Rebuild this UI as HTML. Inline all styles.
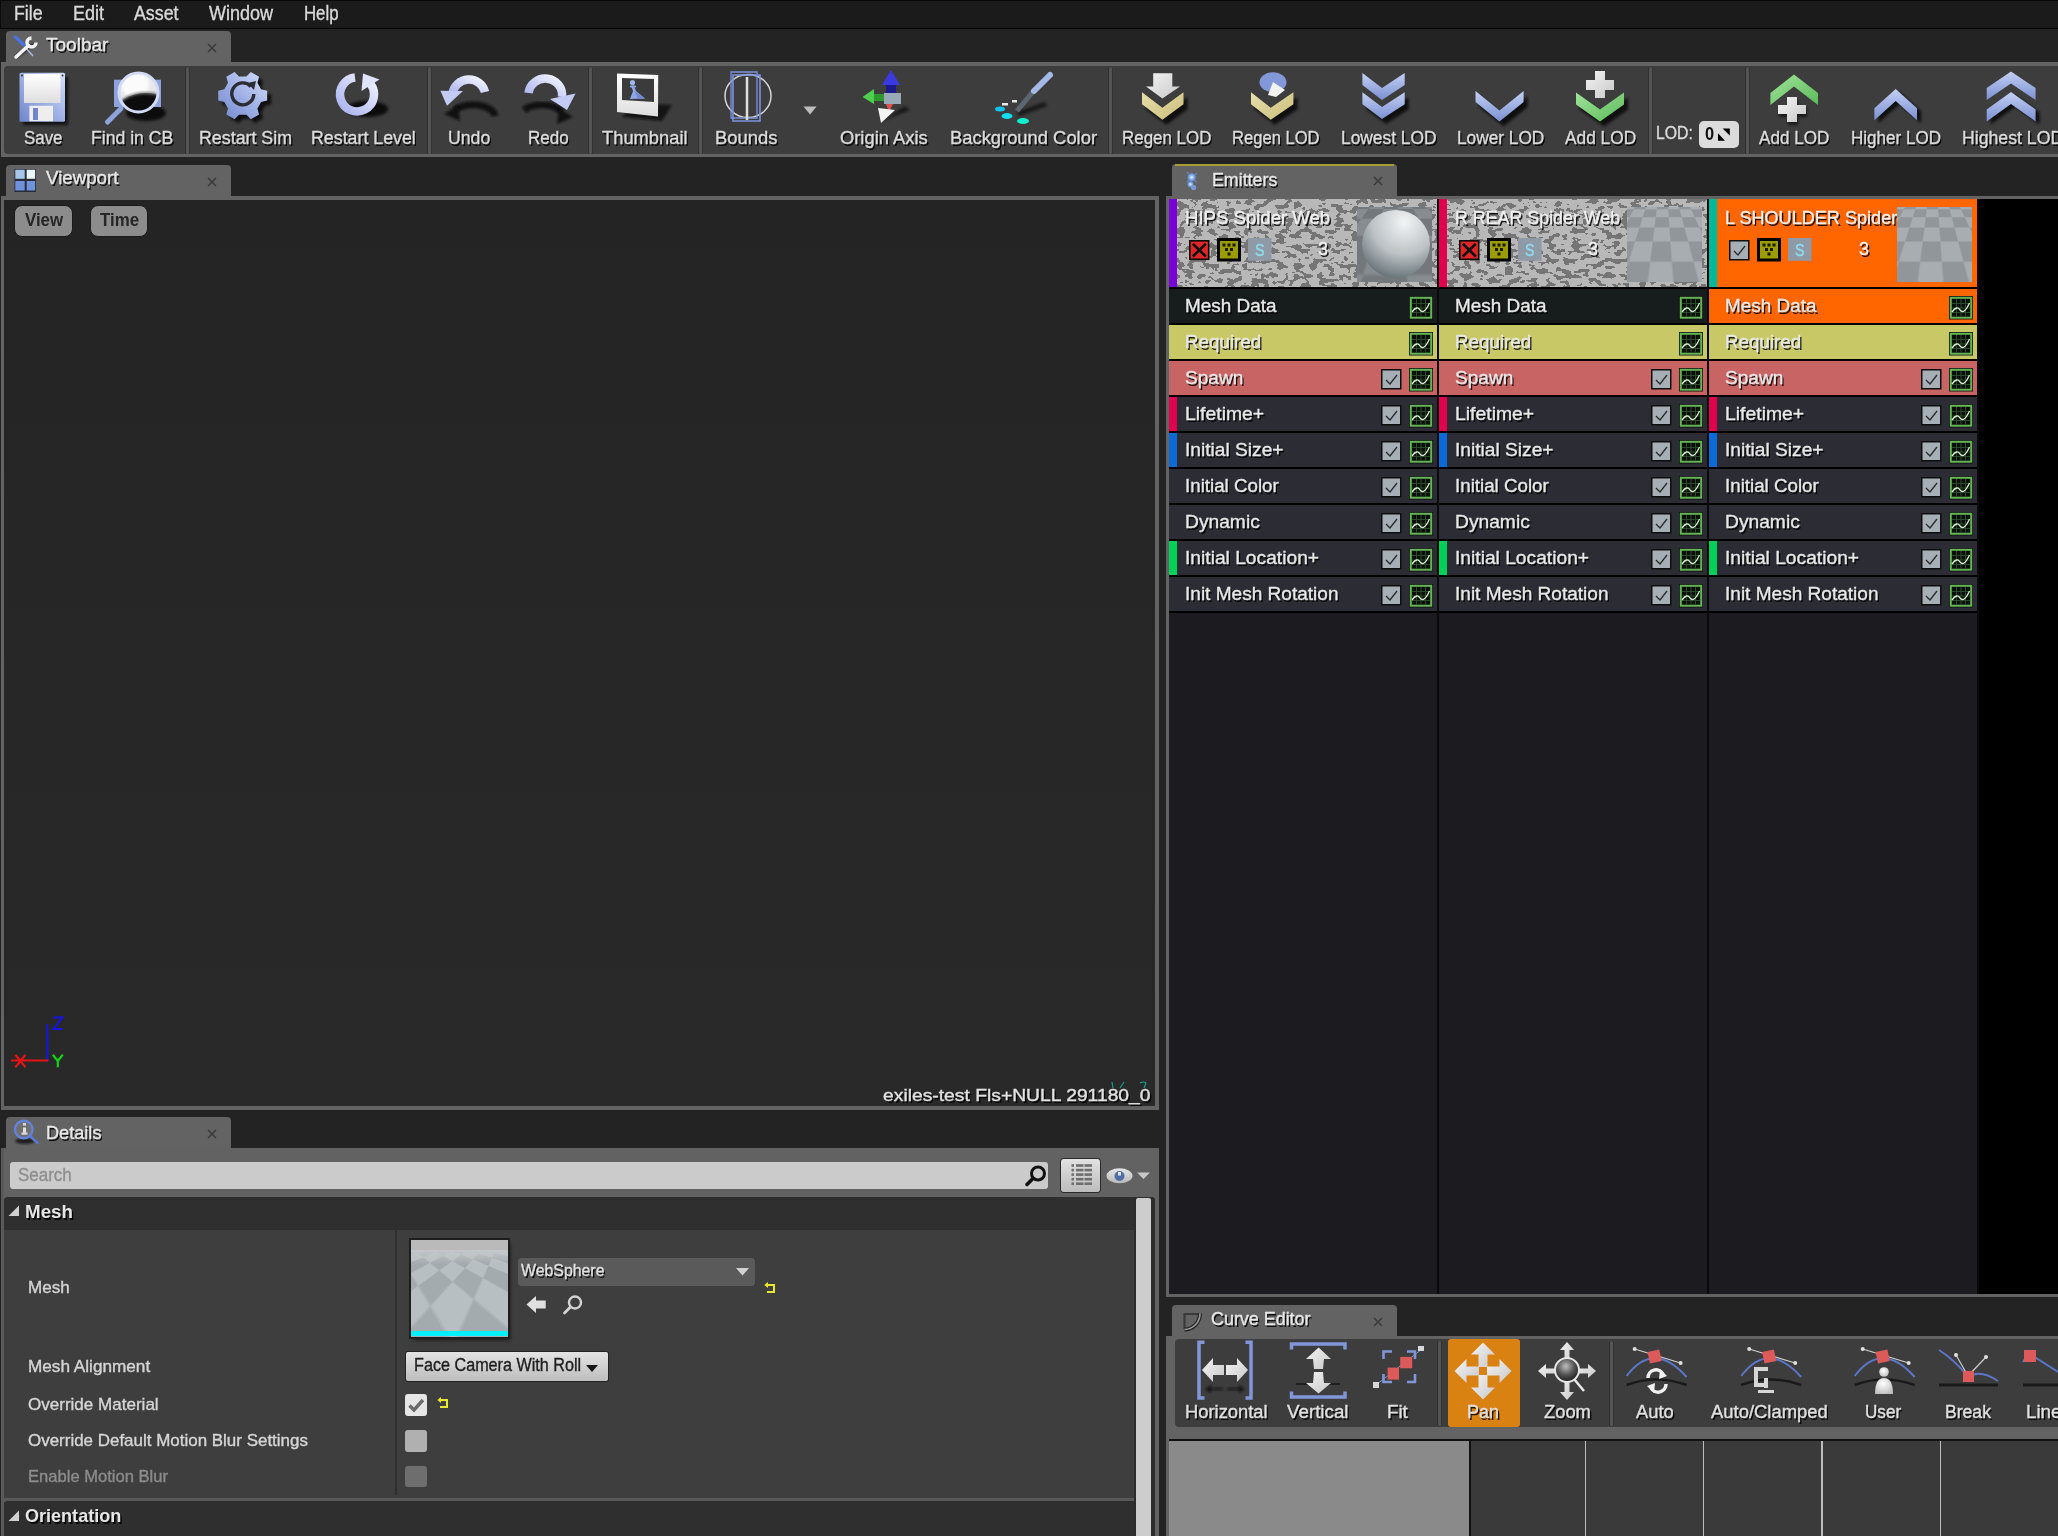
<!DOCTYPE html>
<html><head><meta charset="utf-8"><style>
html,body{margin:0;padding:0}
body{width:2058px;height:1536px;overflow:hidden;background:#232323;position:relative;font-family:"Liberation Sans",sans-serif}
div,svg{position:absolute;box-sizing:border-box}
.t{white-space:nowrap;transform-origin:0 0;-webkit-text-stroke:0.35px currentColor}
</style></head><body>
<svg style="left:0;top:0;position:absolute" width="0" height="0"><defs>
<filter id="bl" x="-50%" y="-50%" width="200%" height="200%"><feGaussianBlur stdDeviation="1.6"/></filter>
<filter id="bl2" x="-50%" y="-50%" width="200%" height="200%"><feGaussianBlur stdDeviation="0.8"/></filter>
<linearGradient id="gBlue" x1="1" y1="0" x2="0" y2="1"><stop offset="0" stop-color="#d6e0fa"/><stop offset="0.5" stop-color="#9fb1e6"/><stop offset="1" stop-color="#7086cc"/></linearGradient>
<linearGradient id="gBlueV" x1="0" y1="0" x2="0" y2="1"><stop offset="0" stop-color="#c4d0f4"/><stop offset="1" stop-color="#7a90d2"/></linearGradient>
<linearGradient id="gLav" x1="1" y1="0" x2="0" y2="1"><stop offset="0" stop-color="#f2f4ff"/><stop offset="0.6" stop-color="#c6ccf6"/><stop offset="1" stop-color="#aab2ee"/></linearGradient>
<linearGradient id="gWhite" x1="0" y1="0" x2="0" y2="1"><stop offset="0" stop-color="#ffffff"/><stop offset="1" stop-color="#dedede"/></linearGradient>
<linearGradient id="gWhite2" x1="0" y1="0" x2="1" y2="1"><stop offset="0" stop-color="#f4f4f4"/><stop offset="1" stop-color="#c8c8c8"/></linearGradient>
<linearGradient id="gGold" x1="0" y1="0" x2="1" y2="1"><stop offset="0" stop-color="#e8e0ac"/><stop offset="1" stop-color="#c9bd7a"/></linearGradient>
<linearGradient id="gGreen" x1="0" y1="0" x2="1" y2="1"><stop offset="0" stop-color="#9fe39a"/><stop offset="1" stop-color="#5dbb5a"/></linearGradient>
<linearGradient id="gLens" x1="0" y1="0" x2="0" y2="1"><stop offset="0" stop-color="#f6f6f6"/><stop offset="0.42" stop-color="#b0b0b0"/><stop offset="0.55" stop-color="#2a2a2a"/><stop offset="1" stop-color="#000"/></linearGradient>
<radialGradient id="gSphere" cx="0.62" cy="0.18" r="0.95"><stop offset="0" stop-color="#f2f4f5"/><stop offset="0.5" stop-color="#bcc2c5"/><stop offset="1" stop-color="#4f5c62"/></radialGradient>
<radialGradient id="gBall" cx="0.45" cy="0.35" r="0.7"><stop offset="0" stop-color="#bfbfbf"/><stop offset="0.5" stop-color="#555"/><stop offset="1" stop-color="#111"/></radialGradient>
<radialGradient id="gBallW" cx="0.45" cy="0.35" r="0.7"><stop offset="0" stop-color="#ffffff"/><stop offset="1" stop-color="#bdbdbd"/></radialGradient>
<linearGradient id="gBtn" x1="0" y1="0" x2="0" y2="1"><stop offset="0" stop-color="#e6e6e6"/><stop offset="1" stop-color="#b9b9b9"/></linearGradient>
<filter id="camo" x="0" y="0" width="100%" height="100%">
 <feTurbulence type="fractalNoise" baseFrequency="0.09 0.13" numOctaves="2" seed="7" result="n"/>
 <feColorMatrix type="matrix" values="0 0 0 0 0  0 0 0 0 0  0 0 0 0 0  3 0 0 0 -1.05" in="n" result="a"/>
 <feComponentTransfer in="a" result="b"><feFuncA type="discrete" tableValues="0 0 1 1"/></feComponentTransfer>
 <feFlood flood-color="#6c6c6c" result="c"/>
 <feComposite in="c" in2="b" operator="in" result="d"/>
 <feFlood flood-color="#b6b6b6" result="e"/>
 <feMerge><feMergeNode in="e"/><feMergeNode in="d"/></feMerge>
</filter>
</defs></svg>
<div style="left:0px;top:0px;width:2058px;height:29px;background:#1b1b1b;border-top:1px solid #080808;border-bottom:1.5px solid #050505;border-left:1px solid #0a0a0a;"></div>
<div class="t" style="left:14.30px;top:4.04px;font-size:19.57px;line-height:19.57px;color:#dadada;transform:scaleX(0.9065);">File</div>
<div class="t" style="left:73.10px;top:4.04px;font-size:19.57px;line-height:19.57px;color:#dadada;transform:scaleX(0.9199);">Edit</div>
<div class="t" style="left:134.30px;top:4.04px;font-size:19.57px;line-height:19.57px;color:#dadada;transform:scaleX(0.9098);">Asset</div>
<div class="t" style="left:209.00px;top:4.04px;font-size:19.57px;line-height:19.57px;color:#dadada;transform:scaleX(0.9217);">Window</div>
<div class="t" style="left:304.00px;top:4.04px;font-size:19.57px;line-height:19.57px;color:#dadada;transform:scaleX(0.8570);">Help</div>
<div style="left:6.4px;top:31px;width:224.6px;height:32px;background:#636363;border-radius:4px 4px 0 0;"></div>
<div class="t" style="left:46.00px;top:36.47px;font-size:18.70px;line-height:18.70px;color:#e8e8e8;text-shadow:1.5px 1.5px 0 rgba(0,0,0,.85);transform:scaleX(1.0192);">Toolbar</div>
<svg style="left:207.4px;top:43px;" width="10" height="10" viewBox="0 0 10 10"><path d="M1 1 L9 9 M9 1 L1 9" stroke="#3a3a3a" stroke-width="1.5"/></svg>
<div style="left:1px;top:62px;width:2057px;height:95px;background:#636363;"></div>
<div style="left:3.6px;top:65.5px;width:2054.4px;height:88.5px;background:#3d3d3d;border-radius:4px 0 0 4px;"></div>
<div style="left:186.2px;top:67px;width:3.2px;height:87px;background:#545454;border-radius:2px;box-shadow:-0.8px 0 0 #2c2c2c, 0.8px 0 0 #333;"></div>
<div style="left:427.5px;top:67px;width:3.2px;height:87px;background:#545454;border-radius:2px;box-shadow:-0.8px 0 0 #2c2c2c, 0.8px 0 0 #333;"></div>
<div style="left:588.5px;top:67px;width:3.2px;height:87px;background:#545454;border-radius:2px;box-shadow:-0.8px 0 0 #2c2c2c, 0.8px 0 0 #333;"></div>
<div style="left:699.0px;top:67px;width:3.2px;height:87px;background:#545454;border-radius:2px;box-shadow:-0.8px 0 0 #2c2c2c, 0.8px 0 0 #333;"></div>
<div style="left:1108.6px;top:67px;width:3.2px;height:87px;background:#545454;border-radius:2px;box-shadow:-0.8px 0 0 #2c2c2c, 0.8px 0 0 #333;"></div>
<div style="left:1648.5px;top:67px;width:3.2px;height:87px;background:#545454;border-radius:2px;box-shadow:-0.8px 0 0 #2c2c2c, 0.8px 0 0 #333;"></div>
<div style="left:1746.0px;top:67px;width:3.2px;height:87px;background:#545454;border-radius:2px;box-shadow:-0.8px 0 0 #2c2c2c, 0.8px 0 0 #333;"></div>
<div class="t" style="left:23.50px;top:129.04px;font-size:18.26px;line-height:18.26px;color:#dcdcdc;text-shadow:1.5px 1.5px 0 rgba(0,0,0,.85);transform:scaleX(0.9247);">Save</div>
<div class="t" style="left:90.90px;top:129.04px;font-size:18.26px;line-height:18.26px;color:#dcdcdc;text-shadow:1.5px 1.5px 0 rgba(0,0,0,.85);transform:scaleX(0.9656);">Find in CB</div>
<div class="t" style="left:198.80px;top:129.04px;font-size:18.26px;line-height:18.26px;color:#dcdcdc;text-shadow:1.5px 1.5px 0 rgba(0,0,0,.85);transform:scaleX(0.9762);">Restart Sim</div>
<div class="t" style="left:311.00px;top:129.04px;font-size:18.26px;line-height:18.26px;color:#dcdcdc;text-shadow:1.5px 1.5px 0 rgba(0,0,0,.85);transform:scaleX(0.9749);">Restart Level</div>
<div class="t" style="left:447.80px;top:129.04px;font-size:18.26px;line-height:18.26px;color:#dcdcdc;text-shadow:1.5px 1.5px 0 rgba(0,0,0,.85);transform:scaleX(0.9692);">Undo</div>
<div class="t" style="left:527.50px;top:129.04px;font-size:18.26px;line-height:18.26px;color:#dcdcdc;text-shadow:1.5px 1.5px 0 rgba(0,0,0,.85);transform:scaleX(0.9326);">Redo</div>
<div class="t" style="left:601.70px;top:129.04px;font-size:18.26px;line-height:18.26px;color:#dcdcdc;text-shadow:1.5px 1.5px 0 rgba(0,0,0,.85);transform:scaleX(1.0038);">Thumbnail</div>
<div class="t" style="left:715.00px;top:129.04px;font-size:18.26px;line-height:18.26px;color:#dcdcdc;text-shadow:1.5px 1.5px 0 rgba(0,0,0,.85);transform:scaleX(1.0089);">Bounds</div>
<div class="t" style="left:840.30px;top:129.04px;font-size:18.26px;line-height:18.26px;color:#dcdcdc;text-shadow:1.5px 1.5px 0 rgba(0,0,0,.85);transform:scaleX(1.0047);">Origin Axis</div>
<div class="t" style="left:950.40px;top:129.04px;font-size:18.26px;line-height:18.26px;color:#dcdcdc;text-shadow:1.5px 1.5px 0 rgba(0,0,0,.85);transform:scaleX(1.0063);">Background Color</div>
<div class="t" style="left:1121.50px;top:129.04px;font-size:18.26px;line-height:18.26px;color:#dcdcdc;text-shadow:1.5px 1.5px 0 rgba(0,0,0,.85);transform:scaleX(0.9272);">Regen LOD</div>
<div class="t" style="left:1231.80px;top:129.04px;font-size:18.26px;line-height:18.26px;color:#dcdcdc;text-shadow:1.5px 1.5px 0 rgba(0,0,0,.85);transform:scaleX(0.9085);">Regen LOD</div>
<div class="t" style="left:1340.80px;top:129.04px;font-size:18.26px;line-height:18.26px;color:#dcdcdc;text-shadow:1.5px 1.5px 0 rgba(0,0,0,.85);transform:scaleX(0.9514);">Lowest LOD</div>
<div class="t" style="left:1457.30px;top:129.04px;font-size:18.26px;line-height:18.26px;color:#dcdcdc;text-shadow:1.5px 1.5px 0 rgba(0,0,0,.85);transform:scaleX(0.9453);">Lower LOD</div>
<div class="t" style="left:1565.30px;top:129.04px;font-size:18.26px;line-height:18.26px;color:#dcdcdc;text-shadow:1.5px 1.5px 0 rgba(0,0,0,.85);transform:scaleX(0.9481);">Add LOD</div>
<div class="t" style="left:1759.40px;top:129.04px;font-size:18.26px;line-height:18.26px;color:#dcdcdc;text-shadow:1.5px 1.5px 0 rgba(0,0,0,.85);transform:scaleX(0.9361);">Add LOD</div>
<div class="t" style="left:1850.90px;top:129.04px;font-size:18.26px;line-height:18.26px;color:#dcdcdc;text-shadow:1.5px 1.5px 0 rgba(0,0,0,.85);transform:scaleX(0.9334);">Higher LOD</div>
<div class="t" style="left:1961.70px;top:129.04px;font-size:18.26px;line-height:18.26px;color:#dcdcdc;text-shadow:1.5px 1.5px 0 rgba(0,0,0,.85);transform:scaleX(0.9690);">Highest LOD</div>
<svg style="left:18px;top:70px;overflow:visible;" width="54" height="56" viewBox="18 70 54 56">
<rect x="23" y="77" width="45" height="48" fill="#000" opacity=".7" filter="url(#bl)"/>
<rect x="19.5" y="72.7" width="45.5" height="49" rx="1.5" fill="url(#gBlue)"/>
<rect x="24" y="74" width="36.5" height="29" fill="url(#gWhite)"/>
<rect x="29.4" y="105.7" width="23.6" height="15.5" fill="#eeeeee"/>
<rect x="33" y="108" width="5" height="12" fill="#6f86cc"/>
<circle cx="22" cy="75.5" r="1" fill="#333"/><circle cx="62.5" cy="75.5" r="1" fill="#333"/></svg>
<svg style="left:104px;top:68px;overflow:visible;" width="60" height="58" viewBox="104 68 60 58">
<ellipse cx="146" cy="113" rx="20" ry="8" fill="#000" opacity=".8" filter="url(#bl)"/>
<rect x="114" y="79.7" width="47" height="27.3" fill="#8fa2dc"/>
<line x1="107.5" y1="122" x2="121" y2="108.5" stroke="#8ea2dc" stroke-width="5" stroke-linecap="round"/>
<clipPath id="lensc"><circle cx="138.5" cy="92.5" r="19.5"/></clipPath>
<circle cx="138.5" cy="92.5" r="19.5" fill="#e8e8e8"/>
<g clip-path="url(#lensc)"><circle cx="135" cy="84" r="14" fill="#fbfbfb" filter="url(#bl)"/><ellipse cx="146" cy="112" rx="30" ry="19" fill="#0c0c0c"/><ellipse cx="146" cy="112" rx="30" ry="19" fill="none" stroke="#777" stroke-width="2" filter="url(#bl2)"/></g>
<circle cx="138.5" cy="92.5" r="19.5" fill="none" stroke="#d2dcf6" stroke-width="3"/></svg>
<svg style="left:215px;top:68px;overflow:visible;" width="57" height="58" viewBox="215 68 57 58">
<polygon points="265.1,93.3 271.2,94.8 271.2,104.4 265.1,105.9 261.4,112.4 263.1,118.5 254.8,123.2 250.4,118.7 243.0,118.7 238.6,123.2 230.3,118.5 232.0,112.4 228.3,105.9 222.2,104.4 222.2,94.8 228.3,93.3 232.0,86.8 230.3,80.7 238.6,76.0 243.0,80.5 250.4,80.5 254.8,76.0 263.1,80.7 261.4,86.8" fill="#000" opacity=".75" filter="url(#bl)"/>
<polygon points="261.1,89.3 267.2,90.8 267.2,100.4 261.1,101.9 257.4,108.4 259.1,114.5 250.8,119.2 246.4,114.7 239.0,114.7 234.6,119.2 226.3,114.5 228.0,108.4 224.3,101.9 218.2,100.4 218.2,90.8 224.3,89.3 228.0,82.8 226.3,76.7 234.6,72.0 239.0,76.5 246.4,76.5 250.8,72.0 259.1,76.7 257.4,82.8" fill="url(#gBlue)"/>
<path d="M 251 86.5 A 11 11 0 1 0 253.8 94" stroke="#2c2c34" stroke-width="3.4" fill="none"/>
<polygon points="247.5,83 256,81 254,90" fill="#2c2c34"/></svg>
<svg style="left:330px;top:68px;overflow:visible;" width="60" height="58" viewBox="330 68 60 58">
<ellipse cx="367" cy="109" rx="21" ry="8" fill="#000" opacity=".8" filter="url(#bl)"/>
<path d="M 355 77.5 A 17 17 0 1 0 370.5 84" stroke="url(#gLav)" stroke-width="8.5" fill="none"/>
<polygon points="361.5,91 363,73.5 379.5,79.5" fill="#dfe3fc"/></svg>
<svg style="left:438px;top:72px;overflow:visible;" width="62" height="52" viewBox="438 72 62 52">
<path d="M 495 116 A 22 12 0 0 0 455 110" stroke="#111" stroke-width="7" fill="none" opacity=".9" filter="url(#bl2)"/>
<polygon points="444,114 458,105 460,121" fill="#111" opacity=".9" filter="url(#bl2)"/>
<path d="M 485 92 A 16.5 16 0 0 0 452.5 94" stroke="url(#gLav)" stroke-width="8.5" fill="none"/>
<polygon points="440.4,90.8 463,91 447,105.7" fill="#c3cbf4"/></svg>
<svg style="left:520px;top:72px;overflow:visible;" width="60" height="52" viewBox="520 72 60 52">
<path d="M 524 110 A 22 12 0 0 1 562 112" stroke="#111" stroke-width="7" fill="none" opacity=".9" filter="url(#bl2)"/>
<polygon points="573,117 559,108 557,124" fill="#111" opacity=".9" filter="url(#bl2)"/>
<path d="M 528.5 93 A 16.5 16 0 0 1 562 97" stroke="url(#gLav)" stroke-width="8.5" fill="none"/>
<polygon points="575.5,93.5 567,110 550,99" fill="#c3cbf4"/></svg>
<svg style="left:614px;top:70px;overflow:visible;" width="62" height="56" viewBox="614 70 62 56">
<polygon points="622,117 662,121 672,105 636,104" fill="#111" opacity=".85" filter="url(#bl2)"/>
<polygon points="617,73.5 658.2,75 658,116.4 617,112" fill="url(#gWhite)"/>
<polygon points="622,78 654,79 654,102 622,100" fill="#3b3b3b"/>
<circle cx="632.5" cy="82.5" r="2.6" fill="#9fb4ec"/>
<ellipse cx="633" cy="86.5" rx="3.2" ry="1.2" fill="#8ea6e6"/>
<polygon points="631.5,87 634.5,87 636,91 645,98.5 630,99 633,91" fill="#8ea6e6"/>
<polygon points="634.5,91 645,98.5 638,99" fill="#6f88d0"/></svg>
<svg style="left:720px;top:68px;overflow:visible;" width="62" height="60" viewBox="720 68 62 60">
<ellipse cx="748" cy="96" rx="23" ry="21.5" fill="none" stroke="#d4d4d4" stroke-width="1.5"/>
<polygon points="733,75 760,75 760,121 733,121" fill="none" stroke="#7b92dc" stroke-width="1.6"/>
<polygon points="731,72 757,72 757,118 731,118" fill="none" stroke="#7b92dc" stroke-width="1.3"/>
<line x1="747" y1="77" x2="747" y2="120" stroke="#e0e0e0" stroke-width="2.5"/></svg>
<svg style="left:858px;top:66px;overflow:visible;" width="56" height="60" viewBox="858 66 56 60">
<polygon points="880,122 905,106 910,110" fill="#000" opacity=".6" filter="url(#bl)"/>
<polygon points="884,93 901,93 901,104 884,104" fill="#9aa9b8"/>
<polygon points="886,80 896,80 896,93 886,93" fill="#1a1a8c"/>
<polygon points="891,70 900,85 882,85" fill="#3a3ae0"/>
<polygon points="872,94 884,94 884,101 872,101" fill="#2e9a2e"/>
<polygon points="862.5,97 874,89 874,104" fill="#4fcf4f"/>
<polygon points="886,104 893,104 889,112" fill="#e05050"/>
<polygon points="881,123 878,108 895,110" fill="#f4f4f4"/></svg>
<svg style="left:994px;top:68px;overflow:visible;" width="64" height="58" viewBox="994 68 64 58">
<line x1="1018" y1="114" x2="1046" y2="104" stroke="#000" stroke-width="5" opacity=".6" filter="url(#bl)"/>
<line x1="1017" y1="111" x2="1036" y2="88" stroke="#5b6670" stroke-width="5"/>
<line x1="1034" y1="91" x2="1050" y2="75" stroke="#a5b9e8" stroke-width="6" stroke-linecap="round"/>
<ellipse cx="1000" cy="109" rx="5" ry="2.5" fill="#10c4e8"/>
<ellipse cx="1007" cy="116" rx="5.5" ry="3" fill="#10e0f0"/>
<ellipse cx="1023" cy="121" rx="6" ry="3" fill="#10f0d0"/>
<rect x="1002" y="103" width="6" height="2.5" fill="#e8e8e8"/><rect x="1012" y="100" width="5" height="2.5" fill="#e8e8e8"/></svg>
<svg style="left:1140px;top:70px;overflow:visible;" width="55" height="56" viewBox="1140 70 55 56"><polygon points="1146.0,97.2 1166.4,112.7 1187.5,97.2 1187.5,109.2 1166.4,124.7 1146.0,109.2" fill="#000" opacity="0.75" filter="url(#bl)"/>
<polygon points="1142.0,92.2 1162.4,107.7 1183.5,92.2 1183.5,104.2 1162.4,119.7 1142.0,104.2" fill="url(#gGold)"/>
<polygon points="1153.2,73.2 1172.3,73.2 1172.3,86.5 1180,86.5 1162.4,98.5 1146,86.5 1153.2,86.5" fill="url(#gWhite2)"/></svg>
<svg style="left:1248px;top:68px;overflow:visible;" width="56" height="58" viewBox="1248 68 56 58"><polygon points="1255.0,97.2 1274.8,112.7 1297.4,97.2 1297.4,109.2 1274.8,124.7 1255.0,109.2" fill="#000" opacity="0.75" filter="url(#bl)"/>
<polygon points="1251.0,92.2 1270.8,107.7 1293.4,92.2 1293.4,104.2 1270.8,119.7 1251.0,104.2" fill="url(#gGold)"/>
<ellipse cx="1273" cy="82.3" rx="13.5" ry="10" fill="#8298d8"/>
<polygon points="1273,82 1285,90 1276,97 1268,95" fill="#f2f2f2"/></svg>
<svg style="left:1360px;top:70px;overflow:visible;" width="56" height="56" viewBox="1360 70 56 56"><polygon points="1366.4,97.2 1386.0,112.0 1408.7,97.2 1408.7,109.2 1386.0,124.0 1366.4,109.2" fill="#000" opacity="0.75" filter="url(#bl)"/>
<polygon points="1362.4,73.0 1382.0,87.9 1404.7,73.0 1404.7,85.0 1382.0,99.9 1362.4,85.0" fill="url(#gBlueV)"/><polygon points="1362.4,92.2 1382.0,107.0 1404.7,92.2 1404.7,104.2 1382.0,119.0 1362.4,104.2" fill="url(#gBlueV)"/></svg>
<svg style="left:1472px;top:88px;overflow:visible;" width="58" height="38" viewBox="1472 88 58 38"><polygon points="1479.5,96.0 1503.5,115.5 1527.6,96.0 1527.6,107.0 1503.5,126.5 1479.5,107.0" fill="#000" opacity="0.75" filter="url(#bl)"/><polygon points="1475.5,91.0 1499.5,110.5 1523.6,91.0 1523.6,102.0 1499.5,121.5 1475.5,102.0" fill="url(#gBlueV)"/></svg>
<svg style="left:1574px;top:68px;overflow:visible;" width="56" height="58" viewBox="1574 68 56 58"><polygon points="1580.0,97.5 1604.0,114.5 1628.0,97.5 1628.0,109.5 1604.0,126.5 1580.0,109.5" fill="#000" opacity="0.75" filter="url(#bl)"/><polygon points="1576.0,92.5 1600.0,109.5 1624.0,92.5 1624.0,104.5 1600.0,121.5 1576.0,104.5" fill="url(#gGreen)"/>
<polygon points="1595,71 1605,71 1605,80 1614,80 1614,90 1605,90 1605,98 1595,98 1595,90 1586,90 1586,80 1595,80" fill="url(#gWhite2)"/></svg>
<svg style="left:1768px;top:70px;overflow:visible;" width="56" height="56" viewBox="1768 70 56 56"><polygon points="1783,97 1793,97 1793,105 1802,105 1802,114 1793,114 1793,122 1783,122 1783,114 1774,114 1774,105 1783,105" fill="#000" opacity=".6" transform="translate(5,3)" filter="url(#bl)"/>
<polygon points="1770.4,105.0 1794.0,86.6 1818.0,105.0 1818.0,93.0 1794.0,74.6 1770.4,93.0" fill="url(#gGreen)"/>
<polygon points="1787,97 1797,97 1797,105 1806,105 1806,114 1797,114 1797,122 1787,122 1787,114 1778,114 1778,105 1787,105" fill="url(#gWhite2)"/></svg>
<svg style="left:1872px;top:86px;overflow:visible;" width="52" height="40" viewBox="1872 86 52 40"><polygon points="1878.4,123.3 1899.7,104.0 1921.0,123.3 1921.0,111.3 1899.7,92.0 1878.4,111.3" fill="#000" opacity="0.75" filter="url(#bl)"/><polygon points="1874.4,120.3 1895.7,101.0 1917.0,120.3 1917.0,108.3 1895.7,89.0 1874.4,108.3" fill="url(#gBlueV)"/></svg>
<svg style="left:1984px;top:68px;overflow:visible;" width="74" height="58" viewBox="1984 68 74 58"><polygon points="1990.7,124.4 2015.0,107.0 2039.6,124.4 2039.6,112.4 2015.0,95.0 1990.7,112.4" fill="#000" opacity="0.75" filter="url(#bl)"/><polygon points="1986.7,100.0 2011.0,83.4 2035.6,100.0 2035.6,88.0 2011.0,71.4 1986.7,88.0" fill="url(#gBlueV)"/><polygon points="1986.7,121.4 2011.0,104.0 2035.6,121.4 2035.6,109.4 2011.0,92.0 1986.7,109.4" fill="url(#gBlueV)"/></svg>
<svg style="left:803px;top:106px;" width="14" height="9" viewBox="0 0 14 9"><path d="M0.5 0.5 L13.5 0.5 L7 8.5 Z" fill="#bdbdbd"/></svg>
<div class="t" style="left:1656.00px;top:125.49px;font-size:17.97px;line-height:17.97px;color:#dcdcdc;transform:scaleX(0.8794);">LOD:</div>
<div style="left:1698.5px;top:120.9px;width:40.4px;height:26.7px;background:#dcdcdc;border-radius:5px;"></div>
<div class="t" style="left:1704.70px;top:125.56px;font-size:17.54px;line-height:17.54px;color:#111;font-weight:bold;-webkit-text-stroke:0;transform:scaleX(0.9350);">0</div>
<svg style="left:1716px;top:127px;overflow:visible;" width="16" height="15" viewBox="1716 127 16 15"><polygon points="1722.6,128.6 1729.8,128.6 1729.8,135.6" fill="#000"/><polygon points="1718,133.2 1718,140.7 1725,140.7" fill="#000"/></svg>
<div style="left:6.4px;top:164.7px;width:225px;height:32.3px;background:#636363;border-radius:4px 4px 0 0;"></div>
<div class="t" style="left:46.00px;top:170.13px;font-size:17.68px;line-height:17.68px;color:#e8e8e8;text-shadow:1.5px 1.5px 0 rgba(0,0,0,.85);transform:scaleX(1.0574);">Viewport</div>
<svg style="left:207.4px;top:176.7px;" width="10" height="10" viewBox="0 0 10 10"><path d="M1 1 L9 9 M9 1 L1 9" stroke="#3a3a3a" stroke-width="1.5"/></svg>
<div style="left:1px;top:196px;width:1157.5px;height:914px;background:#636363;"></div>
<div style="left:4px;top:199.5px;width:1151.4px;height:906.5px;background:linear-gradient(#242424,#292929);"></div>
<div style="left:14.399999999999999px;top:205.3px;width:58.7px;height:31.8px;background:#8c8c8c;border-radius:8px;border:1.5px solid #1a1a1a;"></div>
<div class="t" style="left:25.00px;top:211.91px;font-size:17.83px;line-height:17.83px;color:#262626;font-weight:bold;-webkit-text-stroke:0;transform:scaleX(0.9422);">View</div>
<div style="left:89.60000000000001px;top:205.3px;width:58.7px;height:31.8px;background:#8c8c8c;border-radius:8px;border:1.5px solid #1a1a1a;"></div>
<div class="t" style="left:99.70px;top:211.91px;font-size:17.83px;line-height:17.83px;color:#262626;font-weight:bold;-webkit-text-stroke:0;transform:scaleX(0.9475);">Time</div>
<svg style="left:8px;top:1012px;" width="60" height="60" viewBox="0 0 60 60">
<path d="M39.4 12 V49.2" stroke="#1414e6" stroke-width="2"/>
<path d="M2.9 48.5 H40.4" stroke="#e61414" stroke-width="2"/>
<path d="M45.5 5.5 H54.5 L45.5 17 H54.5" stroke="#1414e6" stroke-width="2" fill="none"/>
<path d="M44.8 42.7 L49.8 49 L54.8 42.7 M49.8 49 V55.3" stroke="#14d214" stroke-width="2.2" fill="none"/>
<path d="M7.3 42.7 L17.5 55.3 M17.5 42.7 L7.3 55.3" stroke="#e61414" stroke-width="2.2" fill="none"/>
</svg>
<div class="t" style="left:883.10px;top:1087.02px;font-size:17.10px;line-height:17.10px;color:#e2e2e2;text-shadow:1.5px 1.5px 0 rgba(0,0,0,.85);transform:scaleX(1.1286);">exiles-test Fls+NULL 291180_0</div>
<svg style="left:1110px;top:1081px;" width="40" height="8" viewBox="0 0 40 8"><path d="M2 1 L3 7 M10 7 L14 1 M30 2 Q34 0 36 2 L34 7" stroke="#14a08c" stroke-width="1.2" fill="none"/></svg>
<div style="left:6.4px;top:1117px;width:224.6px;height:32px;background:#636363;border-radius:4px 4px 0 0;"></div>
<div class="t" style="left:45.50px;top:1123.54px;font-size:18.26px;line-height:18.26px;color:#e8e8e8;text-shadow:1.5px 1.5px 0 rgba(0,0,0,.85);transform:scaleX(0.9940);">Details</div>
<svg style="left:207.4px;top:1129px;" width="10" height="10" viewBox="0 0 10 10"><path d="M1 1 L9 9 M9 1 L1 9" stroke="#3a3a3a" stroke-width="1.5"/></svg>
<div style="left:1px;top:1148px;width:1157.5px;height:388px;background:#626262;border-left:3px solid #5a5a5a;"></div>
<div style="left:9.6px;top:1162px;width:1038px;height:27px;background:#cbcbcb;border-radius:3px;"></div>
<div class="t" style="left:18.20px;top:1165.66px;font-size:18.12px;line-height:18.12px;color:#8e8e8e;transform:scaleX(0.9376);">Search</div>
<div style="left:1061px;top:1159px;width:39px;height:33px;background:linear-gradient(#e2e2e2,#bcbcbc);border-radius:3px;box-shadow:0 0 0 1px #2a2a2a;"></div>
<div style="left:3.6px;top:1196.6px;width:1151px;height:340px;background:#3e3e3e;border-radius:4px 4px 0 0;"></div>
<div style="left:3.6px;top:1196.6px;width:1151px;height:33px;background:#2f2f2f;border-radius:4px 4px 0 0;"></div>
<svg style="left:8px;top:1205px;" width="12" height="12" viewBox="0 0 12 12"><path d="M11 0.5 V11 H0.5 Z" fill="#d0d0d0"/></svg>
<div class="t" style="left:25.00px;top:1203.17px;font-size:18.70px;line-height:18.70px;color:#e6e6e6;font-weight:bold;-webkit-text-stroke:0;text-shadow:1.5px 1.5px 0 rgba(0,0,0,.85);transform:scaleX(1.0049);">Mesh</div>
<div style="left:394.8px;top:1229.6px;width:2px;height:265px;background:#2e2e2e;"></div>
<div class="t" style="left:27.80px;top:1280.29px;font-size:16.67px;line-height:16.67px;color:#d6d6d6;transform:scaleX(1.0233);">Mesh</div>
<div class="t" style="left:27.80px;top:1358.63px;font-size:15.80px;line-height:15.80px;color:#d6d6d6;transform:scaleX(1.0872);">Mesh Alignment</div>
<div class="t" style="left:27.80px;top:1395.74px;font-size:16.38px;line-height:16.38px;color:#d6d6d6;transform:scaleX(1.0413);">Override Material</div>
<div class="t" style="left:27.80px;top:1432.34px;font-size:16.38px;line-height:16.38px;color:#d6d6d6;transform:scaleX(1.0365);">Override Default Motion Blur Settings</div>
<div class="t" style="left:27.80px;top:1468.34px;font-size:16.38px;line-height:16.38px;color:#8c8c8c;transform:scaleX(1.0131);">Enable Motion Blur</div>
<div style="left:411px;top:1239.7px;width:97px;height:97px;background:#1e1e1e;box-shadow:0 0 0 2px #1e1e1e, 2px 3px 4px rgba(0,0,0,.6);"></div>
<div style="left:411px;top:1239.7px;width:97px;height:97px;overflow:hidden;background:#bababa;perspective:60px;perspective-origin:50% 0px;"><div style="left:-242.5px;top:-281.0px;width:582px;height:582px;transform-origin:50% 50%;transform:rotateX(72deg) rotateZ(38deg);background:conic-gradient(#b8bfc3 25%, #a4abaf 0 50%, #b8bfc3 0 75%, #a4abaf 0) 0 0/22px 22px;background-position:0px 0"></div><div style="left:0;top:0;width:97px;height:10px;background:#bababa"></div></div>
<div style="left:411px;top:1249.7px;width:97px;height:14px;background:linear-gradient(#c4c8ca,rgba(190,196,199,0));"></div>
<div style="left:411px;top:1331.2px;width:97px;height:5.3px;background:#00f0ff;"></div>
<div style="left:517.9px;top:1258px;width:236.7px;height:28.3px;background:#5a5a5a;border-radius:4px;"></div>
<div class="t" style="left:521.00px;top:1262.22px;font-size:17.10px;line-height:17.10px;color:#e2e2e2;text-shadow:1.5px 1.5px 0 rgba(0,0,0,.85);transform:scaleX(0.9278);">WebSphere</div>
<svg style="left:736px;top:1268px;" width="13" height="8" viewBox="0 0 13 8"><path d="M0 0 H13 L6.5 7.6 Z" fill="#d2d2d2"/></svg>
<div style="left:405.9px;top:1352px;width:202px;height:28.5px;background:linear-gradient(#e4e4e4,#bdbdbd);border-radius:2px;box-shadow:0 0 0 1px #232323;"></div>
<div class="t" style="left:413.80px;top:1356.91px;font-size:17.83px;line-height:17.83px;color:#1e1e1e;transform:scaleX(0.9073);">Face Camera With Roll</div>
<svg style="left:586px;top:1365px;" width="12" height="8" viewBox="0 0 12 8"><path d="M0 0 H12 L6 7 Z" fill="#151515"/></svg>
<div style="left:405.3px;top:1394.2px;width:21.5px;height:21.7px;background:#e6e6e6;border-radius:3px;"></div>
<svg style="left:405.3px;top:1394.2px;" width="22" height="22" viewBox="0 0 22 22"><path d="M4.5 11.5 L9 16 L18 6" stroke="#6b6b6b" stroke-width="3.4" fill="none"/></svg>
<div style="left:405.3px;top:1430px;width:21.5px;height:21.6px;background:#b0b0b0;border-radius:3px;"></div>
<div style="left:405.3px;top:1466.3px;width:21.5px;height:21px;background:#6e6e6e;border-radius:3px;"></div>
<svg style="left:437px;top:1397.4px;" width="12" height="12" viewBox="0 0 12 12"><path d="M3.5 3 H10 V10 H3" stroke="#e8e830" stroke-width="2" fill="none"/><path d="M0.3 3 L4 0 L4 6 Z" fill="#e8e830"/></svg>
<svg style="left:763.8px;top:1282px;" width="12" height="12" viewBox="0 0 12 12"><path d="M3.5 3 H10 V10 H3" stroke="#e8e830" stroke-width="2" fill="none"/><path d="M0.3 3 L4 0 L4 6 Z" fill="#e8e830"/></svg>
<div style="left:3.6px;top:1497.5px;width:1151px;height:4px;background:#585858;"></div>
<div style="left:3.6px;top:1501.3px;width:1151px;height:35px;background:#2f2f2f;border-radius:4px 4px 0 0;"></div>
<svg style="left:8px;top:1510px;" width="12" height="12" viewBox="0 0 12 12"><path d="M11 0.5 V11 H0.5 Z" fill="#d0d0d0"/></svg>
<div class="t" style="left:25.30px;top:1508.09px;font-size:17.97px;line-height:17.97px;color:#e6e6e6;font-weight:bold;-webkit-text-stroke:0;text-shadow:1.5px 1.5px 0 rgba(0,0,0,.85);transform:scaleX(1.0049);">Orientation</div>
<div style="left:1134px;top:1196.6px;width:20.6px;height:340px;background:#2c2c2c;border-radius:0 4px 0 0;"></div>
<div style="left:1136px;top:1198px;width:15.3px;height:338px;background:#cdcdcd;border-radius:2px 2px 0 0;"></div>
<div style="left:1172.2px;top:164px;width:224.5px;height:33px;background:#636363;border-radius:4px 4px 0 0;"></div>
<div style="left:1175.2px;top:164px;width:218.5px;height:1.6px;background:#a89c38;"></div>
<div class="t" style="left:1211.70px;top:170.33px;font-size:18.99px;line-height:18.99px;color:#e8e8e8;text-shadow:1.5px 1.5px 0 rgba(0,0,0,.85);transform:scaleX(0.9378);">Emitters</div>
<svg style="left:1373.2px;top:176px;" width="10" height="10" viewBox="0 0 10 10"><path d="M1 1 L9 9 M9 1 L1 9" stroke="#3a3a3a" stroke-width="1.5"/></svg>
<div style="left:1166px;top:196px;width:892px;height:1101px;background:#636363;"></div>
<div style="left:1169px;top:198.6px;width:889px;height:1095px;background:#1c1c20;"></div>
<div style="left:1977.4px;top:198.6px;width:81px;height:1095px;background:#000;"></div>
<div style="left:1437.4px;top:198.6px;width:1.8px;height:1095px;background:#0a0a0c;"></div>
<div style="left:1169px;top:198.6px;width:268.4px;height:88.4px;background:#a4a4a4;"></div>
<div style="left:1169px;top:198.6px;width:7.5px;height:88.4px;background:#7a00d8;"></div>
<div style="left:1169px;top:286.8px;width:268.4px;height:1.9px;background:#000;"></div>
<div style="left:1169px;top:288.7px;width:268.4px;height:34.2px;background:#171c1c;"></div>
<div style="left:1169px;top:322.9px;width:268.4px;height:1.8px;background:#000;"></div>
<div class="t" style="left:1184.80px;top:297.07px;font-size:18.70px;line-height:18.70px;color:#e8e8e8;text-shadow:1.5px 1.5px 0 rgba(0,0,0,.85);transform:scaleX(1.0117);">Mesh Data</div>
<div style="left:1169px;top:324.7px;width:268.4px;height:34.2px;background:#c9c866;"></div>
<div style="left:1169px;top:358.9px;width:268.4px;height:1.8px;background:#000;"></div>
<div class="t" style="left:1184.80px;top:333.07px;font-size:18.70px;line-height:18.70px;color:#e8e8e8;text-shadow:1.5px 1.5px 0 rgba(0,0,0,.85);transform:scaleX(1.0058);">Required</div>
<div style="left:1169px;top:360.7px;width:268.4px;height:34.2px;background:#c86464;"></div>
<div style="left:1169px;top:394.9px;width:268.4px;height:1.8px;background:#000;"></div>
<div class="t" style="left:1184.80px;top:369.07px;font-size:18.70px;line-height:18.70px;color:#e8e8e8;text-shadow:1.5px 1.5px 0 rgba(0,0,0,.85);transform:scaleX(1.0199);">Spawn</div>
<div style="left:1169px;top:396.7px;width:268.4px;height:34.2px;background:#2b2c34;"></div>
<div style="left:1169px;top:430.9px;width:268.4px;height:1.8px;background:#000;"></div>
<div style="left:1169px;top:396.7px;width:7.5px;height:34.2px;background:#e0004e;"></div>
<div class="t" style="left:1184.80px;top:405.07px;font-size:18.70px;line-height:18.70px;color:#e8e8e8;text-shadow:1.5px 1.5px 0 rgba(0,0,0,.85);transform:scaleX(1.0370);">Lifetime+</div>
<div style="left:1169px;top:432.7px;width:268.4px;height:34.2px;background:#2b2c34;"></div>
<div style="left:1169px;top:466.9px;width:268.4px;height:1.8px;background:#000;"></div>
<div style="left:1169px;top:432.7px;width:7.5px;height:34.2px;background:#0a6ad8;"></div>
<div class="t" style="left:1184.80px;top:441.07px;font-size:18.70px;line-height:18.70px;color:#e8e8e8;text-shadow:1.5px 1.5px 0 rgba(0,0,0,.85);transform:scaleX(1.0256);">Initial Size+</div>
<div style="left:1169px;top:468.7px;width:268.4px;height:34.2px;background:#2b2c34;"></div>
<div style="left:1169px;top:502.9px;width:268.4px;height:1.8px;background:#000;"></div>
<div class="t" style="left:1184.80px;top:477.07px;font-size:18.70px;line-height:18.70px;color:#e8e8e8;text-shadow:1.5px 1.5px 0 rgba(0,0,0,.85);transform:scaleX(1.0029);">Initial Color</div>
<div style="left:1169px;top:504.7px;width:268.4px;height:34.2px;background:#2b2c34;"></div>
<div style="left:1169px;top:538.9px;width:268.4px;height:1.8px;background:#000;"></div>
<div class="t" style="left:1184.80px;top:513.07px;font-size:18.70px;line-height:18.70px;color:#e8e8e8;text-shadow:1.5px 1.5px 0 rgba(0,0,0,.85);transform:scaleX(1.0285);">Dynamic</div>
<div style="left:1169px;top:540.7px;width:268.4px;height:34.2px;background:#2b2c34;"></div>
<div style="left:1169px;top:574.9000000000001px;width:268.4px;height:1.8px;background:#000;"></div>
<div style="left:1169px;top:540.7px;width:7.5px;height:34.2px;background:#00cf58;"></div>
<div class="t" style="left:1184.80px;top:549.07px;font-size:18.70px;line-height:18.70px;color:#e8e8e8;text-shadow:1.5px 1.5px 0 rgba(0,0,0,.85);transform:scaleX(1.0280);">Initial Location+</div>
<div style="left:1169px;top:576.7px;width:268.4px;height:34.2px;background:#2b2c34;"></div>
<div style="left:1169px;top:610.9000000000001px;width:268.4px;height:1.8px;background:#000;"></div>
<div class="t" style="left:1184.80px;top:585.07px;font-size:18.70px;line-height:18.70px;color:#e8e8e8;text-shadow:1.5px 1.5px 0 rgba(0,0,0,.85);transform:scaleX(1.0193);">Init Mesh Rotation</div>
<div style="left:1707.4px;top:198.6px;width:1.8px;height:1095px;background:#0a0a0c;"></div>
<div style="left:1439px;top:198.6px;width:268.4px;height:88.4px;background:#a4a4a4;"></div>
<div style="left:1439px;top:198.6px;width:7.5px;height:88.4px;background:#e0004e;"></div>
<div style="left:1439px;top:286.8px;width:268.4px;height:1.9px;background:#000;"></div>
<div style="left:1439px;top:288.7px;width:268.4px;height:34.2px;background:#171c1c;"></div>
<div style="left:1439px;top:322.9px;width:268.4px;height:1.8px;background:#000;"></div>
<div class="t" style="left:1454.80px;top:297.07px;font-size:18.70px;line-height:18.70px;color:#e8e8e8;text-shadow:1.5px 1.5px 0 rgba(0,0,0,.85);transform:scaleX(1.0117);">Mesh Data</div>
<div style="left:1439px;top:324.7px;width:268.4px;height:34.2px;background:#c9c866;"></div>
<div style="left:1439px;top:358.9px;width:268.4px;height:1.8px;background:#000;"></div>
<div class="t" style="left:1454.80px;top:333.07px;font-size:18.70px;line-height:18.70px;color:#e8e8e8;text-shadow:1.5px 1.5px 0 rgba(0,0,0,.85);transform:scaleX(1.0058);">Required</div>
<div style="left:1439px;top:360.7px;width:268.4px;height:34.2px;background:#c86464;"></div>
<div style="left:1439px;top:394.9px;width:268.4px;height:1.8px;background:#000;"></div>
<div class="t" style="left:1454.80px;top:369.07px;font-size:18.70px;line-height:18.70px;color:#e8e8e8;text-shadow:1.5px 1.5px 0 rgba(0,0,0,.85);transform:scaleX(1.0199);">Spawn</div>
<div style="left:1439px;top:396.7px;width:268.4px;height:34.2px;background:#2b2c34;"></div>
<div style="left:1439px;top:430.9px;width:268.4px;height:1.8px;background:#000;"></div>
<div style="left:1439px;top:396.7px;width:7.5px;height:34.2px;background:#e0004e;"></div>
<div class="t" style="left:1454.80px;top:405.07px;font-size:18.70px;line-height:18.70px;color:#e8e8e8;text-shadow:1.5px 1.5px 0 rgba(0,0,0,.85);transform:scaleX(1.0370);">Lifetime+</div>
<div style="left:1439px;top:432.7px;width:268.4px;height:34.2px;background:#2b2c34;"></div>
<div style="left:1439px;top:466.9px;width:268.4px;height:1.8px;background:#000;"></div>
<div style="left:1439px;top:432.7px;width:7.5px;height:34.2px;background:#0a6ad8;"></div>
<div class="t" style="left:1454.80px;top:441.07px;font-size:18.70px;line-height:18.70px;color:#e8e8e8;text-shadow:1.5px 1.5px 0 rgba(0,0,0,.85);transform:scaleX(1.0256);">Initial Size+</div>
<div style="left:1439px;top:468.7px;width:268.4px;height:34.2px;background:#2b2c34;"></div>
<div style="left:1439px;top:502.9px;width:268.4px;height:1.8px;background:#000;"></div>
<div class="t" style="left:1454.80px;top:477.07px;font-size:18.70px;line-height:18.70px;color:#e8e8e8;text-shadow:1.5px 1.5px 0 rgba(0,0,0,.85);transform:scaleX(1.0029);">Initial Color</div>
<div style="left:1439px;top:504.7px;width:268.4px;height:34.2px;background:#2b2c34;"></div>
<div style="left:1439px;top:538.9px;width:268.4px;height:1.8px;background:#000;"></div>
<div class="t" style="left:1454.80px;top:513.07px;font-size:18.70px;line-height:18.70px;color:#e8e8e8;text-shadow:1.5px 1.5px 0 rgba(0,0,0,.85);transform:scaleX(1.0285);">Dynamic</div>
<div style="left:1439px;top:540.7px;width:268.4px;height:34.2px;background:#2b2c34;"></div>
<div style="left:1439px;top:574.9000000000001px;width:268.4px;height:1.8px;background:#000;"></div>
<div style="left:1439px;top:540.7px;width:7.5px;height:34.2px;background:#00cf58;"></div>
<div class="t" style="left:1454.80px;top:549.07px;font-size:18.70px;line-height:18.70px;color:#e8e8e8;text-shadow:1.5px 1.5px 0 rgba(0,0,0,.85);transform:scaleX(1.0280);">Initial Location+</div>
<div style="left:1439px;top:576.7px;width:268.4px;height:34.2px;background:#2b2c34;"></div>
<div style="left:1439px;top:610.9000000000001px;width:268.4px;height:1.8px;background:#000;"></div>
<div class="t" style="left:1454.80px;top:585.07px;font-size:18.70px;line-height:18.70px;color:#e8e8e8;text-shadow:1.5px 1.5px 0 rgba(0,0,0,.85);transform:scaleX(1.0193);">Init Mesh Rotation</div>
<div style="left:1977.4px;top:198.6px;width:1.8px;height:1095px;background:#0a0a0c;"></div>
<div style="left:1709px;top:198.6px;width:268.4px;height:88.4px;background:#ff6600;"></div>
<div style="left:1709px;top:198.6px;width:7.5px;height:88.4px;background:#00b89a;"></div>
<div style="left:1709px;top:286.8px;width:268.4px;height:1.9px;background:#000;"></div>
<div style="left:1709px;top:288.7px;width:268.4px;height:34.2px;background:#ff6600;"></div>
<div style="left:1709px;top:322.9px;width:268.4px;height:1.8px;background:#000;"></div>
<div class="t" style="left:1724.80px;top:297.07px;font-size:18.70px;line-height:18.70px;color:#e8e8e8;text-shadow:1.5px 1.5px 0 rgba(0,0,0,.85);transform:scaleX(1.0117);">Mesh Data</div>
<div style="left:1709px;top:324.7px;width:268.4px;height:34.2px;background:#c9c866;"></div>
<div style="left:1709px;top:358.9px;width:268.4px;height:1.8px;background:#000;"></div>
<div class="t" style="left:1724.80px;top:333.07px;font-size:18.70px;line-height:18.70px;color:#e8e8e8;text-shadow:1.5px 1.5px 0 rgba(0,0,0,.85);transform:scaleX(1.0058);">Required</div>
<div style="left:1709px;top:360.7px;width:268.4px;height:34.2px;background:#c86464;"></div>
<div style="left:1709px;top:394.9px;width:268.4px;height:1.8px;background:#000;"></div>
<div class="t" style="left:1724.80px;top:369.07px;font-size:18.70px;line-height:18.70px;color:#e8e8e8;text-shadow:1.5px 1.5px 0 rgba(0,0,0,.85);transform:scaleX(1.0199);">Spawn</div>
<div style="left:1709px;top:396.7px;width:268.4px;height:34.2px;background:#2b2c34;"></div>
<div style="left:1709px;top:430.9px;width:268.4px;height:1.8px;background:#000;"></div>
<div style="left:1709px;top:396.7px;width:7.5px;height:34.2px;background:#e0004e;"></div>
<div class="t" style="left:1724.80px;top:405.07px;font-size:18.70px;line-height:18.70px;color:#e8e8e8;text-shadow:1.5px 1.5px 0 rgba(0,0,0,.85);transform:scaleX(1.0370);">Lifetime+</div>
<div style="left:1709px;top:432.7px;width:268.4px;height:34.2px;background:#2b2c34;"></div>
<div style="left:1709px;top:466.9px;width:268.4px;height:1.8px;background:#000;"></div>
<div style="left:1709px;top:432.7px;width:7.5px;height:34.2px;background:#0a6ad8;"></div>
<div class="t" style="left:1724.80px;top:441.07px;font-size:18.70px;line-height:18.70px;color:#e8e8e8;text-shadow:1.5px 1.5px 0 rgba(0,0,0,.85);transform:scaleX(1.0256);">Initial Size+</div>
<div style="left:1709px;top:468.7px;width:268.4px;height:34.2px;background:#2b2c34;"></div>
<div style="left:1709px;top:502.9px;width:268.4px;height:1.8px;background:#000;"></div>
<div class="t" style="left:1724.80px;top:477.07px;font-size:18.70px;line-height:18.70px;color:#e8e8e8;text-shadow:1.5px 1.5px 0 rgba(0,0,0,.85);transform:scaleX(1.0029);">Initial Color</div>
<div style="left:1709px;top:504.7px;width:268.4px;height:34.2px;background:#2b2c34;"></div>
<div style="left:1709px;top:538.9px;width:268.4px;height:1.8px;background:#000;"></div>
<div class="t" style="left:1724.80px;top:513.07px;font-size:18.70px;line-height:18.70px;color:#e8e8e8;text-shadow:1.5px 1.5px 0 rgba(0,0,0,.85);transform:scaleX(1.0285);">Dynamic</div>
<div style="left:1709px;top:540.7px;width:268.4px;height:34.2px;background:#2b2c34;"></div>
<div style="left:1709px;top:574.9000000000001px;width:268.4px;height:1.8px;background:#000;"></div>
<div style="left:1709px;top:540.7px;width:7.5px;height:34.2px;background:#00cf58;"></div>
<div class="t" style="left:1724.80px;top:549.07px;font-size:18.70px;line-height:18.70px;color:#e8e8e8;text-shadow:1.5px 1.5px 0 rgba(0,0,0,.85);transform:scaleX(1.0280);">Initial Location+</div>
<div style="left:1709px;top:576.7px;width:268.4px;height:34.2px;background:#2b2c34;"></div>
<div style="left:1709px;top:610.9000000000001px;width:268.4px;height:1.8px;background:#000;"></div>
<div class="t" style="left:1724.80px;top:585.07px;font-size:18.70px;line-height:18.70px;color:#e8e8e8;text-shadow:1.5px 1.5px 0 rgba(0,0,0,.85);transform:scaleX(1.0193);">Init Mesh Rotation</div>
<svg style="left:1176.5px;top:198.6px" width="260.9" height="88.2"><filter id="cm3" x="0" y="0" width="100%" height="100%"><feTurbulence type="fractalNoise" baseFrequency="0.12 0.2" numOctaves="2" seed="3" result="n"/><feColorMatrix in="n" type="matrix" values="0 0 0 0 0  0 0 0 0 0  0 0 0 0 0  4 0 0 0 -1.7" result="a"/><feComponentTransfer in="a" result="b"><feFuncA type="discrete" tableValues="0 1"/></feComponentTransfer><feFlood flood-color="#747474"/><feComposite in2="b" operator="in" result="d"/><feFlood flood-color="#b8b8b8" result="e"/><feMerge><feMergeNode in="e"/><feMergeNode in="d"/></feMerge></filter><rect width="260.9" height="88.2" filter="url(#cm3)"/></svg>
<div class="t" style="left:1184.80px;top:210.16px;font-size:17.54px;line-height:17.54px;color:#f0f0f0;text-shadow:1.5px 1.5px 0 rgba(0,0,0,.85);transform:scaleX(1.0592);">HIPS Spider Web</div>
<div style="left:1356.5px;top:206.5px;width:75px;height:75px;overflow:hidden;background:#8e9498;perspective:60px;perspective-origin:50% 0px;"><div style="left:-112.5px;top:-150.0px;width:300px;height:300px;transform-origin:50% 50%;transform:rotateX(62deg) rotateZ(0deg);background:conic-gradient(#868c90 25%, #72787c 0 50%, #868c90 0 75%, #72787c 0) 0 0/28px 28px;background-position:0px 0"></div></div>
<svg style="left:1356.5px;top:206.5px;overflow:visible;" width="75.0" height="75.0" viewBox="1356.5 206.5 75.0 75.0"><circle cx="1395.5" cy="243.5" r="34" fill="url(#gSphere)"/></svg>
<svg style="left:1188.7px;top:240.2px;overflow:visible;" width="20.5" height="20.0" viewBox="1188.7 240.2 20.5 20.0"><rect x="1189.5" y="241.0" width="18.9" height="18.5" fill="#e02626" stroke="#0a0a0a" stroke-width="1.6"/>
<path d="M 1192.5 244.0 L 1205.5 256.7 M 1205.5 244.0 L 1192.5 256.7" stroke="#111" stroke-width="2.6"/></svg>
<svg style="left:1217px;top:238.2px;overflow:visible;" width="24" height="23.5" viewBox="1217 238.2 24 23.5"><rect x="1218.5" y="239.7" width="21" height="20.5" fill="#9a9c00" stroke="#050505" stroke-width="3"/>
<rect x="1222.5" y="243.7" width="3" height="3" fill="#1a1a00"/><rect x="1227.5" y="243.7" width="3" height="3" fill="#1a1a00"/><rect x="1232.5" y="243.7" width="3" height="3" fill="#1a1a00"/><rect x="1225" y="248.2" width="3" height="3" fill="#1a1a00"/><rect x="1230" y="248.2" width="3" height="3" fill="#1a1a00"/><rect x="1227.5" y="252.7" width="3" height="3" fill="#1a1a00"/></svg>
<svg style="left:1247.5px;top:238.39999999999998px;overflow:visible;" width="23.5" height="22.80000000000001" viewBox="1247.5 238.39999999999998 23.5 22.80000000000001"><rect x="1247.5" y="238.39999999999998" width="23.5" height="22.8" fill="#8f9aa6"/></svg>
<div class="t" style="left:1254.50px;top:242.08px;font-size:16.09px;line-height:16.09px;color:#8fdcef;transform:scaleX(0.8847);">S</div>
<div class="t" style="left:1317.80px;top:239.62px;font-size:18.41px;line-height:18.41px;color:#f2f2f2;text-shadow:1.5px 1.5px 0 rgba(0,0,0,.85);transform:scaleX(0.9789);">3</div>
<svg style="left:1409.2px;top:295.5px;overflow:visible;" width="24.0" height="23.5" viewBox="1409.2 295.5 24.0 23.5"><rect x="1409.2" y="295.5" width="24" height="23.5" fill="#111"/>
<rect x="1411.0" y="297.3" width="20.4" height="19.9" fill="#0a0f0a" stroke="#64b556" stroke-width="2"/>
<path d="M 1416.7 298.5 V 316.5 M 1421.2 298.5 V 316.5 M 1425.7 298.5 V 316.5 M 1412.2 303.0 H 1430.2 M 1412.2 307.5 H 1430.2 M 1412.2 312.0 H 1430.2" stroke="#2b4a2b" stroke-width="1"/>
<path d="M 1412.2 311.5 Q 1417.2 304.5 1420.2 309.5 Q 1424.2 314.5 1429.7 302.5" stroke="#d8f0d0" stroke-width="1.3" fill="none"/></svg>
<svg style="left:1409.2px;top:331.5px;overflow:visible;" width="24.0" height="23.5" viewBox="1409.2 331.5 24.0 23.5"><rect x="1409.2" y="331.5" width="24" height="23.5" fill="#111"/>
<rect x="1411.0" y="333.3" width="20.4" height="19.9" fill="#0a0f0a" stroke="#64b556" stroke-width="2"/>
<path d="M 1416.7 334.5 V 352.5 M 1421.2 334.5 V 352.5 M 1425.7 334.5 V 352.5 M 1412.2 339.0 H 1430.2 M 1412.2 343.5 H 1430.2 M 1412.2 348.0 H 1430.2" stroke="#2b4a2b" stroke-width="1"/>
<path d="M 1412.2 347.5 Q 1417.2 340.5 1420.2 345.5 Q 1424.2 350.5 1429.7 338.5" stroke="#d8f0d0" stroke-width="1.3" fill="none"/></svg>
<svg style="left:1409.2px;top:367.5px;overflow:visible;" width="24.0" height="23.5" viewBox="1409.2 367.5 24.0 23.5"><rect x="1409.2" y="367.5" width="24" height="23.5" fill="#111"/>
<rect x="1411.0" y="369.3" width="20.4" height="19.9" fill="#0a0f0a" stroke="#64b556" stroke-width="2"/>
<path d="M 1416.7 370.5 V 388.5 M 1421.2 370.5 V 388.5 M 1425.7 370.5 V 388.5 M 1412.2 375.0 H 1430.2 M 1412.2 379.5 H 1430.2 M 1412.2 384.0 H 1430.2" stroke="#2b4a2b" stroke-width="1"/>
<path d="M 1412.2 383.5 Q 1417.2 376.5 1420.2 381.5 Q 1424.2 386.5 1429.7 374.5" stroke="#d8f0d0" stroke-width="1.3" fill="none"/></svg>
<svg style="left:1380.8px;top:368.59999999999997px;overflow:visible;" width="20.5" height="20.5" viewBox="1380.8 368.59999999999997 20.5 20.5"><rect x="1381.55" y="369.34999999999997" width="19" height="19" fill="#a6afb6" stroke="#0e0e0e" stroke-width="1.5"/>
<path d="M 1385.8 379.59999999999997 L 1389.8 383.59999999999997 L 1396.8 374.59999999999997" stroke="#2a2a2a" stroke-width="1.3" fill="none"/></svg>
<svg style="left:1409.2px;top:403.5px;overflow:visible;" width="24.0" height="23.5" viewBox="1409.2 403.5 24.0 23.5"><rect x="1409.2" y="403.5" width="24" height="23.5" fill="#111"/>
<rect x="1411.0" y="405.3" width="20.4" height="19.9" fill="#0a0f0a" stroke="#64b556" stroke-width="2"/>
<path d="M 1416.7 406.5 V 424.5 M 1421.2 406.5 V 424.5 M 1425.7 406.5 V 424.5 M 1412.2 411.0 H 1430.2 M 1412.2 415.5 H 1430.2 M 1412.2 420.0 H 1430.2" stroke="#2b4a2b" stroke-width="1"/>
<path d="M 1412.2 419.5 Q 1417.2 412.5 1420.2 417.5 Q 1424.2 422.5 1429.7 410.5" stroke="#d8f0d0" stroke-width="1.3" fill="none"/></svg>
<svg style="left:1380.8px;top:404.59999999999997px;overflow:visible;" width="20.5" height="20.5" viewBox="1380.8 404.59999999999997 20.5 20.5"><rect x="1381.55" y="405.34999999999997" width="19" height="19" fill="#a6afb6" stroke="#0e0e0e" stroke-width="1.5"/>
<path d="M 1385.8 415.59999999999997 L 1389.8 419.59999999999997 L 1396.8 410.59999999999997" stroke="#2a2a2a" stroke-width="1.3" fill="none"/></svg>
<svg style="left:1409.2px;top:439.5px;overflow:visible;" width="24.0" height="23.5" viewBox="1409.2 439.5 24.0 23.5"><rect x="1409.2" y="439.5" width="24" height="23.5" fill="#111"/>
<rect x="1411.0" y="441.3" width="20.4" height="19.9" fill="#0a0f0a" stroke="#64b556" stroke-width="2"/>
<path d="M 1416.7 442.5 V 460.5 M 1421.2 442.5 V 460.5 M 1425.7 442.5 V 460.5 M 1412.2 447.0 H 1430.2 M 1412.2 451.5 H 1430.2 M 1412.2 456.0 H 1430.2" stroke="#2b4a2b" stroke-width="1"/>
<path d="M 1412.2 455.5 Q 1417.2 448.5 1420.2 453.5 Q 1424.2 458.5 1429.7 446.5" stroke="#d8f0d0" stroke-width="1.3" fill="none"/></svg>
<svg style="left:1380.8px;top:440.59999999999997px;overflow:visible;" width="20.5" height="20.5" viewBox="1380.8 440.59999999999997 20.5 20.5"><rect x="1381.55" y="441.34999999999997" width="19" height="19" fill="#a6afb6" stroke="#0e0e0e" stroke-width="1.5"/>
<path d="M 1385.8 451.59999999999997 L 1389.8 455.59999999999997 L 1396.8 446.59999999999997" stroke="#2a2a2a" stroke-width="1.3" fill="none"/></svg>
<svg style="left:1409.2px;top:475.5px;overflow:visible;" width="24.0" height="23.5" viewBox="1409.2 475.5 24.0 23.5"><rect x="1409.2" y="475.5" width="24" height="23.5" fill="#111"/>
<rect x="1411.0" y="477.3" width="20.4" height="19.9" fill="#0a0f0a" stroke="#64b556" stroke-width="2"/>
<path d="M 1416.7 478.5 V 496.5 M 1421.2 478.5 V 496.5 M 1425.7 478.5 V 496.5 M 1412.2 483.0 H 1430.2 M 1412.2 487.5 H 1430.2 M 1412.2 492.0 H 1430.2" stroke="#2b4a2b" stroke-width="1"/>
<path d="M 1412.2 491.5 Q 1417.2 484.5 1420.2 489.5 Q 1424.2 494.5 1429.7 482.5" stroke="#d8f0d0" stroke-width="1.3" fill="none"/></svg>
<svg style="left:1380.8px;top:476.59999999999997px;overflow:visible;" width="20.5" height="20.5" viewBox="1380.8 476.59999999999997 20.5 20.5"><rect x="1381.55" y="477.34999999999997" width="19" height="19" fill="#a6afb6" stroke="#0e0e0e" stroke-width="1.5"/>
<path d="M 1385.8 487.59999999999997 L 1389.8 491.59999999999997 L 1396.8 482.59999999999997" stroke="#2a2a2a" stroke-width="1.3" fill="none"/></svg>
<svg style="left:1409.2px;top:511.5px;overflow:visible;" width="24.0" height="23.5" viewBox="1409.2 511.5 24.0 23.5"><rect x="1409.2" y="511.5" width="24" height="23.5" fill="#111"/>
<rect x="1411.0" y="513.3" width="20.4" height="19.9" fill="#0a0f0a" stroke="#64b556" stroke-width="2"/>
<path d="M 1416.7 514.5 V 532.5 M 1421.2 514.5 V 532.5 M 1425.7 514.5 V 532.5 M 1412.2 519.0 H 1430.2 M 1412.2 523.5 H 1430.2 M 1412.2 528.0 H 1430.2" stroke="#2b4a2b" stroke-width="1"/>
<path d="M 1412.2 527.5 Q 1417.2 520.5 1420.2 525.5 Q 1424.2 530.5 1429.7 518.5" stroke="#d8f0d0" stroke-width="1.3" fill="none"/></svg>
<svg style="left:1380.8px;top:512.6px;overflow:visible;" width="20.5" height="20.5" viewBox="1380.8 512.6 20.5 20.5"><rect x="1381.55" y="513.35" width="19" height="19" fill="#a6afb6" stroke="#0e0e0e" stroke-width="1.5"/>
<path d="M 1385.8 523.6 L 1389.8 527.6 L 1396.8 518.6" stroke="#2a2a2a" stroke-width="1.3" fill="none"/></svg>
<svg style="left:1409.2px;top:547.5px;overflow:visible;" width="24.0" height="23.5" viewBox="1409.2 547.5 24.0 23.5"><rect x="1409.2" y="547.5" width="24" height="23.5" fill="#111"/>
<rect x="1411.0" y="549.3" width="20.4" height="19.9" fill="#0a0f0a" stroke="#64b556" stroke-width="2"/>
<path d="M 1416.7 550.5 V 568.5 M 1421.2 550.5 V 568.5 M 1425.7 550.5 V 568.5 M 1412.2 555.0 H 1430.2 M 1412.2 559.5 H 1430.2 M 1412.2 564.0 H 1430.2" stroke="#2b4a2b" stroke-width="1"/>
<path d="M 1412.2 563.5 Q 1417.2 556.5 1420.2 561.5 Q 1424.2 566.5 1429.7 554.5" stroke="#d8f0d0" stroke-width="1.3" fill="none"/></svg>
<svg style="left:1380.8px;top:548.6px;overflow:visible;" width="20.5" height="20.5" viewBox="1380.8 548.6 20.5 20.5"><rect x="1381.55" y="549.35" width="19" height="19" fill="#a6afb6" stroke="#0e0e0e" stroke-width="1.5"/>
<path d="M 1385.8 559.6 L 1389.8 563.6 L 1396.8 554.6" stroke="#2a2a2a" stroke-width="1.3" fill="none"/></svg>
<svg style="left:1409.2px;top:583.5px;overflow:visible;" width="24.0" height="23.5" viewBox="1409.2 583.5 24.0 23.5"><rect x="1409.2" y="583.5" width="24" height="23.5" fill="#111"/>
<rect x="1411.0" y="585.3" width="20.4" height="19.9" fill="#0a0f0a" stroke="#64b556" stroke-width="2"/>
<path d="M 1416.7 586.5 V 604.5 M 1421.2 586.5 V 604.5 M 1425.7 586.5 V 604.5 M 1412.2 591.0 H 1430.2 M 1412.2 595.5 H 1430.2 M 1412.2 600.0 H 1430.2" stroke="#2b4a2b" stroke-width="1"/>
<path d="M 1412.2 599.5 Q 1417.2 592.5 1420.2 597.5 Q 1424.2 602.5 1429.7 590.5" stroke="#d8f0d0" stroke-width="1.3" fill="none"/></svg>
<svg style="left:1380.8px;top:584.6px;overflow:visible;" width="20.5" height="20.5" viewBox="1380.8 584.6 20.5 20.5"><rect x="1381.55" y="585.35" width="19" height="19" fill="#a6afb6" stroke="#0e0e0e" stroke-width="1.5"/>
<path d="M 1385.8 595.6 L 1389.8 599.6 L 1396.8 590.6" stroke="#2a2a2a" stroke-width="1.3" fill="none"/></svg>
<svg style="left:1446.5px;top:198.6px" width="260.9" height="88.2"><filter id="cm8" x="0" y="0" width="100%" height="100%"><feTurbulence type="fractalNoise" baseFrequency="0.12 0.2" numOctaves="2" seed="8" result="n"/><feColorMatrix in="n" type="matrix" values="0 0 0 0 0  0 0 0 0 0  0 0 0 0 0  4 0 0 0 -1.7" result="a"/><feComponentTransfer in="a" result="b"><feFuncA type="discrete" tableValues="0 1"/></feComponentTransfer><feFlood flood-color="#747474"/><feComposite in2="b" operator="in" result="d"/><feFlood flood-color="#b8b8b8" result="e"/><feMerge><feMergeNode in="e"/><feMergeNode in="d"/></feMerge></filter><rect width="260.9" height="88.2" filter="url(#cm8)"/></svg>
<div class="t" style="left:1454.80px;top:210.16px;font-size:17.54px;line-height:17.54px;color:#f0f0f0;text-shadow:1.5px 1.5px 0 rgba(0,0,0,.85);transform:scaleX(1.0171);">R REAR Spider Web</div>
<div style="left:1626.5px;top:206.5px;width:75px;height:75px;overflow:hidden;background:#a8adb1;perspective:80px;perspective-origin:50% 0px;"><div style="left:-112.5px;top:-150.0px;width:300px;height:300px;transform-origin:50% 50%;transform:rotateX(55deg) rotateZ(0deg);background:conic-gradient(#a8adb1 25%, #91969a 0 50%, #a8adb1 0 75%, #91969a 0) 0 0/22px 22px;background-position:0px 0"></div></div>
<svg style="left:1458.7px;top:240.2px;overflow:visible;" width="20.5" height="20.0" viewBox="1458.7 240.2 20.5 20.0"><rect x="1459.5" y="241.0" width="18.9" height="18.5" fill="#e02626" stroke="#0a0a0a" stroke-width="1.6"/>
<path d="M 1462.5 244.0 L 1475.5 256.7 M 1475.5 244.0 L 1462.5 256.7" stroke="#111" stroke-width="2.6"/></svg>
<svg style="left:1487px;top:238.2px;overflow:visible;" width="24" height="23.5" viewBox="1487 238.2 24 23.5"><rect x="1488.5" y="239.7" width="21" height="20.5" fill="#9a9c00" stroke="#050505" stroke-width="3"/>
<rect x="1492.5" y="243.7" width="3" height="3" fill="#1a1a00"/><rect x="1497.5" y="243.7" width="3" height="3" fill="#1a1a00"/><rect x="1502.5" y="243.7" width="3" height="3" fill="#1a1a00"/><rect x="1495" y="248.2" width="3" height="3" fill="#1a1a00"/><rect x="1500" y="248.2" width="3" height="3" fill="#1a1a00"/><rect x="1497.5" y="252.7" width="3" height="3" fill="#1a1a00"/></svg>
<svg style="left:1517.5px;top:238.39999999999998px;overflow:visible;" width="23.5" height="22.80000000000001" viewBox="1517.5 238.39999999999998 23.5 22.80000000000001"><rect x="1517.5" y="238.39999999999998" width="23.5" height="22.8" fill="#8f9aa6"/></svg>
<div class="t" style="left:1524.50px;top:242.08px;font-size:16.09px;line-height:16.09px;color:#8fdcef;transform:scaleX(0.8847);">S</div>
<div class="t" style="left:1587.80px;top:239.62px;font-size:18.41px;line-height:18.41px;color:#f2f2f2;text-shadow:1.5px 1.5px 0 rgba(0,0,0,.85);transform:scaleX(0.9789);">3</div>
<svg style="left:1679.2px;top:295.5px;overflow:visible;" width="24.0" height="23.5" viewBox="1679.2 295.5 24.0 23.5"><rect x="1679.2" y="295.5" width="24" height="23.5" fill="#111"/>
<rect x="1681.0" y="297.3" width="20.4" height="19.9" fill="#0a0f0a" stroke="#64b556" stroke-width="2"/>
<path d="M 1686.7 298.5 V 316.5 M 1691.2 298.5 V 316.5 M 1695.7 298.5 V 316.5 M 1682.2 303.0 H 1700.2 M 1682.2 307.5 H 1700.2 M 1682.2 312.0 H 1700.2" stroke="#2b4a2b" stroke-width="1"/>
<path d="M 1682.2 311.5 Q 1687.2 304.5 1690.2 309.5 Q 1694.2 314.5 1699.7 302.5" stroke="#d8f0d0" stroke-width="1.3" fill="none"/></svg>
<svg style="left:1679.2px;top:331.5px;overflow:visible;" width="24.0" height="23.5" viewBox="1679.2 331.5 24.0 23.5"><rect x="1679.2" y="331.5" width="24" height="23.5" fill="#111"/>
<rect x="1681.0" y="333.3" width="20.4" height="19.9" fill="#0a0f0a" stroke="#64b556" stroke-width="2"/>
<path d="M 1686.7 334.5 V 352.5 M 1691.2 334.5 V 352.5 M 1695.7 334.5 V 352.5 M 1682.2 339.0 H 1700.2 M 1682.2 343.5 H 1700.2 M 1682.2 348.0 H 1700.2" stroke="#2b4a2b" stroke-width="1"/>
<path d="M 1682.2 347.5 Q 1687.2 340.5 1690.2 345.5 Q 1694.2 350.5 1699.7 338.5" stroke="#d8f0d0" stroke-width="1.3" fill="none"/></svg>
<svg style="left:1679.2px;top:367.5px;overflow:visible;" width="24.0" height="23.5" viewBox="1679.2 367.5 24.0 23.5"><rect x="1679.2" y="367.5" width="24" height="23.5" fill="#111"/>
<rect x="1681.0" y="369.3" width="20.4" height="19.9" fill="#0a0f0a" stroke="#64b556" stroke-width="2"/>
<path d="M 1686.7 370.5 V 388.5 M 1691.2 370.5 V 388.5 M 1695.7 370.5 V 388.5 M 1682.2 375.0 H 1700.2 M 1682.2 379.5 H 1700.2 M 1682.2 384.0 H 1700.2" stroke="#2b4a2b" stroke-width="1"/>
<path d="M 1682.2 383.5 Q 1687.2 376.5 1690.2 381.5 Q 1694.2 386.5 1699.7 374.5" stroke="#d8f0d0" stroke-width="1.3" fill="none"/></svg>
<svg style="left:1650.8px;top:368.59999999999997px;overflow:visible;" width="20.5" height="20.5" viewBox="1650.8 368.59999999999997 20.5 20.5"><rect x="1651.55" y="369.34999999999997" width="19" height="19" fill="#a6afb6" stroke="#0e0e0e" stroke-width="1.5"/>
<path d="M 1655.8 379.59999999999997 L 1659.8 383.59999999999997 L 1666.8 374.59999999999997" stroke="#2a2a2a" stroke-width="1.3" fill="none"/></svg>
<svg style="left:1679.2px;top:403.5px;overflow:visible;" width="24.0" height="23.5" viewBox="1679.2 403.5 24.0 23.5"><rect x="1679.2" y="403.5" width="24" height="23.5" fill="#111"/>
<rect x="1681.0" y="405.3" width="20.4" height="19.9" fill="#0a0f0a" stroke="#64b556" stroke-width="2"/>
<path d="M 1686.7 406.5 V 424.5 M 1691.2 406.5 V 424.5 M 1695.7 406.5 V 424.5 M 1682.2 411.0 H 1700.2 M 1682.2 415.5 H 1700.2 M 1682.2 420.0 H 1700.2" stroke="#2b4a2b" stroke-width="1"/>
<path d="M 1682.2 419.5 Q 1687.2 412.5 1690.2 417.5 Q 1694.2 422.5 1699.7 410.5" stroke="#d8f0d0" stroke-width="1.3" fill="none"/></svg>
<svg style="left:1650.8px;top:404.59999999999997px;overflow:visible;" width="20.5" height="20.5" viewBox="1650.8 404.59999999999997 20.5 20.5"><rect x="1651.55" y="405.34999999999997" width="19" height="19" fill="#a6afb6" stroke="#0e0e0e" stroke-width="1.5"/>
<path d="M 1655.8 415.59999999999997 L 1659.8 419.59999999999997 L 1666.8 410.59999999999997" stroke="#2a2a2a" stroke-width="1.3" fill="none"/></svg>
<svg style="left:1679.2px;top:439.5px;overflow:visible;" width="24.0" height="23.5" viewBox="1679.2 439.5 24.0 23.5"><rect x="1679.2" y="439.5" width="24" height="23.5" fill="#111"/>
<rect x="1681.0" y="441.3" width="20.4" height="19.9" fill="#0a0f0a" stroke="#64b556" stroke-width="2"/>
<path d="M 1686.7 442.5 V 460.5 M 1691.2 442.5 V 460.5 M 1695.7 442.5 V 460.5 M 1682.2 447.0 H 1700.2 M 1682.2 451.5 H 1700.2 M 1682.2 456.0 H 1700.2" stroke="#2b4a2b" stroke-width="1"/>
<path d="M 1682.2 455.5 Q 1687.2 448.5 1690.2 453.5 Q 1694.2 458.5 1699.7 446.5" stroke="#d8f0d0" stroke-width="1.3" fill="none"/></svg>
<svg style="left:1650.8px;top:440.59999999999997px;overflow:visible;" width="20.5" height="20.5" viewBox="1650.8 440.59999999999997 20.5 20.5"><rect x="1651.55" y="441.34999999999997" width="19" height="19" fill="#a6afb6" stroke="#0e0e0e" stroke-width="1.5"/>
<path d="M 1655.8 451.59999999999997 L 1659.8 455.59999999999997 L 1666.8 446.59999999999997" stroke="#2a2a2a" stroke-width="1.3" fill="none"/></svg>
<svg style="left:1679.2px;top:475.5px;overflow:visible;" width="24.0" height="23.5" viewBox="1679.2 475.5 24.0 23.5"><rect x="1679.2" y="475.5" width="24" height="23.5" fill="#111"/>
<rect x="1681.0" y="477.3" width="20.4" height="19.9" fill="#0a0f0a" stroke="#64b556" stroke-width="2"/>
<path d="M 1686.7 478.5 V 496.5 M 1691.2 478.5 V 496.5 M 1695.7 478.5 V 496.5 M 1682.2 483.0 H 1700.2 M 1682.2 487.5 H 1700.2 M 1682.2 492.0 H 1700.2" stroke="#2b4a2b" stroke-width="1"/>
<path d="M 1682.2 491.5 Q 1687.2 484.5 1690.2 489.5 Q 1694.2 494.5 1699.7 482.5" stroke="#d8f0d0" stroke-width="1.3" fill="none"/></svg>
<svg style="left:1650.8px;top:476.59999999999997px;overflow:visible;" width="20.5" height="20.5" viewBox="1650.8 476.59999999999997 20.5 20.5"><rect x="1651.55" y="477.34999999999997" width="19" height="19" fill="#a6afb6" stroke="#0e0e0e" stroke-width="1.5"/>
<path d="M 1655.8 487.59999999999997 L 1659.8 491.59999999999997 L 1666.8 482.59999999999997" stroke="#2a2a2a" stroke-width="1.3" fill="none"/></svg>
<svg style="left:1679.2px;top:511.5px;overflow:visible;" width="24.0" height="23.5" viewBox="1679.2 511.5 24.0 23.5"><rect x="1679.2" y="511.5" width="24" height="23.5" fill="#111"/>
<rect x="1681.0" y="513.3" width="20.4" height="19.9" fill="#0a0f0a" stroke="#64b556" stroke-width="2"/>
<path d="M 1686.7 514.5 V 532.5 M 1691.2 514.5 V 532.5 M 1695.7 514.5 V 532.5 M 1682.2 519.0 H 1700.2 M 1682.2 523.5 H 1700.2 M 1682.2 528.0 H 1700.2" stroke="#2b4a2b" stroke-width="1"/>
<path d="M 1682.2 527.5 Q 1687.2 520.5 1690.2 525.5 Q 1694.2 530.5 1699.7 518.5" stroke="#d8f0d0" stroke-width="1.3" fill="none"/></svg>
<svg style="left:1650.8px;top:512.6px;overflow:visible;" width="20.5" height="20.5" viewBox="1650.8 512.6 20.5 20.5"><rect x="1651.55" y="513.35" width="19" height="19" fill="#a6afb6" stroke="#0e0e0e" stroke-width="1.5"/>
<path d="M 1655.8 523.6 L 1659.8 527.6 L 1666.8 518.6" stroke="#2a2a2a" stroke-width="1.3" fill="none"/></svg>
<svg style="left:1679.2px;top:547.5px;overflow:visible;" width="24.0" height="23.5" viewBox="1679.2 547.5 24.0 23.5"><rect x="1679.2" y="547.5" width="24" height="23.5" fill="#111"/>
<rect x="1681.0" y="549.3" width="20.4" height="19.9" fill="#0a0f0a" stroke="#64b556" stroke-width="2"/>
<path d="M 1686.7 550.5 V 568.5 M 1691.2 550.5 V 568.5 M 1695.7 550.5 V 568.5 M 1682.2 555.0 H 1700.2 M 1682.2 559.5 H 1700.2 M 1682.2 564.0 H 1700.2" stroke="#2b4a2b" stroke-width="1"/>
<path d="M 1682.2 563.5 Q 1687.2 556.5 1690.2 561.5 Q 1694.2 566.5 1699.7 554.5" stroke="#d8f0d0" stroke-width="1.3" fill="none"/></svg>
<svg style="left:1650.8px;top:548.6px;overflow:visible;" width="20.5" height="20.5" viewBox="1650.8 548.6 20.5 20.5"><rect x="1651.55" y="549.35" width="19" height="19" fill="#a6afb6" stroke="#0e0e0e" stroke-width="1.5"/>
<path d="M 1655.8 559.6 L 1659.8 563.6 L 1666.8 554.6" stroke="#2a2a2a" stroke-width="1.3" fill="none"/></svg>
<svg style="left:1679.2px;top:583.5px;overflow:visible;" width="24.0" height="23.5" viewBox="1679.2 583.5 24.0 23.5"><rect x="1679.2" y="583.5" width="24" height="23.5" fill="#111"/>
<rect x="1681.0" y="585.3" width="20.4" height="19.9" fill="#0a0f0a" stroke="#64b556" stroke-width="2"/>
<path d="M 1686.7 586.5 V 604.5 M 1691.2 586.5 V 604.5 M 1695.7 586.5 V 604.5 M 1682.2 591.0 H 1700.2 M 1682.2 595.5 H 1700.2 M 1682.2 600.0 H 1700.2" stroke="#2b4a2b" stroke-width="1"/>
<path d="M 1682.2 599.5 Q 1687.2 592.5 1690.2 597.5 Q 1694.2 602.5 1699.7 590.5" stroke="#d8f0d0" stroke-width="1.3" fill="none"/></svg>
<svg style="left:1650.8px;top:584.6px;overflow:visible;" width="20.5" height="20.5" viewBox="1650.8 584.6 20.5 20.5"><rect x="1651.55" y="585.35" width="19" height="19" fill="#a6afb6" stroke="#0e0e0e" stroke-width="1.5"/>
<path d="M 1655.8 595.6 L 1659.8 599.6 L 1666.8 590.6" stroke="#2a2a2a" stroke-width="1.3" fill="none"/></svg>
<div class="t" style="left:1724.80px;top:210.16px;font-size:17.54px;line-height:17.54px;color:#f0f0f0;text-shadow:1.5px 1.5px 0 rgba(0,0,0,.85);transform:scaleX(1.0318);">L SHOULDER Spider</div>
<div style="left:1896.5px;top:206.5px;width:75px;height:75px;overflow:hidden;background:#a8adb1;perspective:80px;perspective-origin:50% 0px;"><div style="left:-112.5px;top:-150.0px;width:300px;height:300px;transform-origin:50% 50%;transform:rotateX(55deg) rotateZ(0deg);background:conic-gradient(#a8adb1 25%, #91969a 0 50%, #a8adb1 0 75%, #91969a 0) 0 0/22px 22px;background-position:0px 0"></div></div>
<svg style="left:1728.8px;top:239.79999999999998px;overflow:visible;" width="20.5" height="20.49999999999997" viewBox="1728.8 239.79999999999998 20.5 20.49999999999997"><rect x="1729.55" y="240.54999999999998" width="19" height="19" fill="#a6afb6" stroke="#0e0e0e" stroke-width="1.5"/>
<path d="M 1733.8 250.79999999999998 L 1737.8 254.79999999999998 L 1744.8 245.79999999999998" stroke="#2a2a2a" stroke-width="1.3" fill="none"/></svg>
<svg style="left:1757px;top:238.2px;overflow:visible;" width="24" height="23.5" viewBox="1757 238.2 24 23.5"><rect x="1758.5" y="239.7" width="21" height="20.5" fill="#9a9c00" stroke="#050505" stroke-width="3"/>
<rect x="1762.5" y="243.7" width="3" height="3" fill="#1a1a00"/><rect x="1767.5" y="243.7" width="3" height="3" fill="#1a1a00"/><rect x="1772.5" y="243.7" width="3" height="3" fill="#1a1a00"/><rect x="1765" y="248.2" width="3" height="3" fill="#1a1a00"/><rect x="1770" y="248.2" width="3" height="3" fill="#1a1a00"/><rect x="1767.5" y="252.7" width="3" height="3" fill="#1a1a00"/></svg>
<svg style="left:1787.5px;top:238.39999999999998px;overflow:visible;" width="23.5" height="22.80000000000001" viewBox="1787.5 238.39999999999998 23.5 22.80000000000001"><rect x="1787.5" y="238.39999999999998" width="23.5" height="22.8" fill="#8f9aa6"/></svg>
<div class="t" style="left:1794.50px;top:242.08px;font-size:16.09px;line-height:16.09px;color:#8fdcef;transform:scaleX(0.8847);">S</div>
<div class="t" style="left:1858.60px;top:239.62px;font-size:18.41px;line-height:18.41px;color:#f2f2f2;text-shadow:1.5px 1.5px 0 rgba(0,0,0,.85);transform:scaleX(0.9789);">3</div>
<svg style="left:1949.2px;top:295.5px;overflow:visible;" width="24.0" height="23.5" viewBox="1949.2 295.5 24.0 23.5"><rect x="1949.2" y="295.5" width="24" height="23.5" fill="#111"/>
<rect x="1951.0" y="297.3" width="20.4" height="19.9" fill="#0a0f0a" stroke="#64b556" stroke-width="2"/>
<path d="M 1956.7 298.5 V 316.5 M 1961.2 298.5 V 316.5 M 1965.7 298.5 V 316.5 M 1952.2 303.0 H 1970.2 M 1952.2 307.5 H 1970.2 M 1952.2 312.0 H 1970.2" stroke="#2b4a2b" stroke-width="1"/>
<path d="M 1952.2 311.5 Q 1957.2 304.5 1960.2 309.5 Q 1964.2 314.5 1969.7 302.5" stroke="#d8f0d0" stroke-width="1.3" fill="none"/></svg>
<svg style="left:1949.2px;top:331.5px;overflow:visible;" width="24.0" height="23.5" viewBox="1949.2 331.5 24.0 23.5"><rect x="1949.2" y="331.5" width="24" height="23.5" fill="#111"/>
<rect x="1951.0" y="333.3" width="20.4" height="19.9" fill="#0a0f0a" stroke="#64b556" stroke-width="2"/>
<path d="M 1956.7 334.5 V 352.5 M 1961.2 334.5 V 352.5 M 1965.7 334.5 V 352.5 M 1952.2 339.0 H 1970.2 M 1952.2 343.5 H 1970.2 M 1952.2 348.0 H 1970.2" stroke="#2b4a2b" stroke-width="1"/>
<path d="M 1952.2 347.5 Q 1957.2 340.5 1960.2 345.5 Q 1964.2 350.5 1969.7 338.5" stroke="#d8f0d0" stroke-width="1.3" fill="none"/></svg>
<svg style="left:1949.2px;top:367.5px;overflow:visible;" width="24.0" height="23.5" viewBox="1949.2 367.5 24.0 23.5"><rect x="1949.2" y="367.5" width="24" height="23.5" fill="#111"/>
<rect x="1951.0" y="369.3" width="20.4" height="19.9" fill="#0a0f0a" stroke="#64b556" stroke-width="2"/>
<path d="M 1956.7 370.5 V 388.5 M 1961.2 370.5 V 388.5 M 1965.7 370.5 V 388.5 M 1952.2 375.0 H 1970.2 M 1952.2 379.5 H 1970.2 M 1952.2 384.0 H 1970.2" stroke="#2b4a2b" stroke-width="1"/>
<path d="M 1952.2 383.5 Q 1957.2 376.5 1960.2 381.5 Q 1964.2 386.5 1969.7 374.5" stroke="#d8f0d0" stroke-width="1.3" fill="none"/></svg>
<svg style="left:1920.8px;top:368.59999999999997px;overflow:visible;" width="20.5" height="20.5" viewBox="1920.8 368.59999999999997 20.5 20.5"><rect x="1921.55" y="369.34999999999997" width="19" height="19" fill="#a6afb6" stroke="#0e0e0e" stroke-width="1.5"/>
<path d="M 1925.8 379.59999999999997 L 1929.8 383.59999999999997 L 1936.8 374.59999999999997" stroke="#2a2a2a" stroke-width="1.3" fill="none"/></svg>
<svg style="left:1949.2px;top:403.5px;overflow:visible;" width="24.0" height="23.5" viewBox="1949.2 403.5 24.0 23.5"><rect x="1949.2" y="403.5" width="24" height="23.5" fill="#111"/>
<rect x="1951.0" y="405.3" width="20.4" height="19.9" fill="#0a0f0a" stroke="#64b556" stroke-width="2"/>
<path d="M 1956.7 406.5 V 424.5 M 1961.2 406.5 V 424.5 M 1965.7 406.5 V 424.5 M 1952.2 411.0 H 1970.2 M 1952.2 415.5 H 1970.2 M 1952.2 420.0 H 1970.2" stroke="#2b4a2b" stroke-width="1"/>
<path d="M 1952.2 419.5 Q 1957.2 412.5 1960.2 417.5 Q 1964.2 422.5 1969.7 410.5" stroke="#d8f0d0" stroke-width="1.3" fill="none"/></svg>
<svg style="left:1920.8px;top:404.59999999999997px;overflow:visible;" width="20.5" height="20.5" viewBox="1920.8 404.59999999999997 20.5 20.5"><rect x="1921.55" y="405.34999999999997" width="19" height="19" fill="#a6afb6" stroke="#0e0e0e" stroke-width="1.5"/>
<path d="M 1925.8 415.59999999999997 L 1929.8 419.59999999999997 L 1936.8 410.59999999999997" stroke="#2a2a2a" stroke-width="1.3" fill="none"/></svg>
<svg style="left:1949.2px;top:439.5px;overflow:visible;" width="24.0" height="23.5" viewBox="1949.2 439.5 24.0 23.5"><rect x="1949.2" y="439.5" width="24" height="23.5" fill="#111"/>
<rect x="1951.0" y="441.3" width="20.4" height="19.9" fill="#0a0f0a" stroke="#64b556" stroke-width="2"/>
<path d="M 1956.7 442.5 V 460.5 M 1961.2 442.5 V 460.5 M 1965.7 442.5 V 460.5 M 1952.2 447.0 H 1970.2 M 1952.2 451.5 H 1970.2 M 1952.2 456.0 H 1970.2" stroke="#2b4a2b" stroke-width="1"/>
<path d="M 1952.2 455.5 Q 1957.2 448.5 1960.2 453.5 Q 1964.2 458.5 1969.7 446.5" stroke="#d8f0d0" stroke-width="1.3" fill="none"/></svg>
<svg style="left:1920.8px;top:440.59999999999997px;overflow:visible;" width="20.5" height="20.5" viewBox="1920.8 440.59999999999997 20.5 20.5"><rect x="1921.55" y="441.34999999999997" width="19" height="19" fill="#a6afb6" stroke="#0e0e0e" stroke-width="1.5"/>
<path d="M 1925.8 451.59999999999997 L 1929.8 455.59999999999997 L 1936.8 446.59999999999997" stroke="#2a2a2a" stroke-width="1.3" fill="none"/></svg>
<svg style="left:1949.2px;top:475.5px;overflow:visible;" width="24.0" height="23.5" viewBox="1949.2 475.5 24.0 23.5"><rect x="1949.2" y="475.5" width="24" height="23.5" fill="#111"/>
<rect x="1951.0" y="477.3" width="20.4" height="19.9" fill="#0a0f0a" stroke="#64b556" stroke-width="2"/>
<path d="M 1956.7 478.5 V 496.5 M 1961.2 478.5 V 496.5 M 1965.7 478.5 V 496.5 M 1952.2 483.0 H 1970.2 M 1952.2 487.5 H 1970.2 M 1952.2 492.0 H 1970.2" stroke="#2b4a2b" stroke-width="1"/>
<path d="M 1952.2 491.5 Q 1957.2 484.5 1960.2 489.5 Q 1964.2 494.5 1969.7 482.5" stroke="#d8f0d0" stroke-width="1.3" fill="none"/></svg>
<svg style="left:1920.8px;top:476.59999999999997px;overflow:visible;" width="20.5" height="20.5" viewBox="1920.8 476.59999999999997 20.5 20.5"><rect x="1921.55" y="477.34999999999997" width="19" height="19" fill="#a6afb6" stroke="#0e0e0e" stroke-width="1.5"/>
<path d="M 1925.8 487.59999999999997 L 1929.8 491.59999999999997 L 1936.8 482.59999999999997" stroke="#2a2a2a" stroke-width="1.3" fill="none"/></svg>
<svg style="left:1949.2px;top:511.5px;overflow:visible;" width="24.0" height="23.5" viewBox="1949.2 511.5 24.0 23.5"><rect x="1949.2" y="511.5" width="24" height="23.5" fill="#111"/>
<rect x="1951.0" y="513.3" width="20.4" height="19.9" fill="#0a0f0a" stroke="#64b556" stroke-width="2"/>
<path d="M 1956.7 514.5 V 532.5 M 1961.2 514.5 V 532.5 M 1965.7 514.5 V 532.5 M 1952.2 519.0 H 1970.2 M 1952.2 523.5 H 1970.2 M 1952.2 528.0 H 1970.2" stroke="#2b4a2b" stroke-width="1"/>
<path d="M 1952.2 527.5 Q 1957.2 520.5 1960.2 525.5 Q 1964.2 530.5 1969.7 518.5" stroke="#d8f0d0" stroke-width="1.3" fill="none"/></svg>
<svg style="left:1920.8px;top:512.6px;overflow:visible;" width="20.5" height="20.5" viewBox="1920.8 512.6 20.5 20.5"><rect x="1921.55" y="513.35" width="19" height="19" fill="#a6afb6" stroke="#0e0e0e" stroke-width="1.5"/>
<path d="M 1925.8 523.6 L 1929.8 527.6 L 1936.8 518.6" stroke="#2a2a2a" stroke-width="1.3" fill="none"/></svg>
<svg style="left:1949.2px;top:547.5px;overflow:visible;" width="24.0" height="23.5" viewBox="1949.2 547.5 24.0 23.5"><rect x="1949.2" y="547.5" width="24" height="23.5" fill="#111"/>
<rect x="1951.0" y="549.3" width="20.4" height="19.9" fill="#0a0f0a" stroke="#64b556" stroke-width="2"/>
<path d="M 1956.7 550.5 V 568.5 M 1961.2 550.5 V 568.5 M 1965.7 550.5 V 568.5 M 1952.2 555.0 H 1970.2 M 1952.2 559.5 H 1970.2 M 1952.2 564.0 H 1970.2" stroke="#2b4a2b" stroke-width="1"/>
<path d="M 1952.2 563.5 Q 1957.2 556.5 1960.2 561.5 Q 1964.2 566.5 1969.7 554.5" stroke="#d8f0d0" stroke-width="1.3" fill="none"/></svg>
<svg style="left:1920.8px;top:548.6px;overflow:visible;" width="20.5" height="20.5" viewBox="1920.8 548.6 20.5 20.5"><rect x="1921.55" y="549.35" width="19" height="19" fill="#a6afb6" stroke="#0e0e0e" stroke-width="1.5"/>
<path d="M 1925.8 559.6 L 1929.8 563.6 L 1936.8 554.6" stroke="#2a2a2a" stroke-width="1.3" fill="none"/></svg>
<svg style="left:1949.2px;top:583.5px;overflow:visible;" width="24.0" height="23.5" viewBox="1949.2 583.5 24.0 23.5"><rect x="1949.2" y="583.5" width="24" height="23.5" fill="#111"/>
<rect x="1951.0" y="585.3" width="20.4" height="19.9" fill="#0a0f0a" stroke="#64b556" stroke-width="2"/>
<path d="M 1956.7 586.5 V 604.5 M 1961.2 586.5 V 604.5 M 1965.7 586.5 V 604.5 M 1952.2 591.0 H 1970.2 M 1952.2 595.5 H 1970.2 M 1952.2 600.0 H 1970.2" stroke="#2b4a2b" stroke-width="1"/>
<path d="M 1952.2 599.5 Q 1957.2 592.5 1960.2 597.5 Q 1964.2 602.5 1969.7 590.5" stroke="#d8f0d0" stroke-width="1.3" fill="none"/></svg>
<svg style="left:1920.8px;top:584.6px;overflow:visible;" width="20.5" height="20.5" viewBox="1920.8 584.6 20.5 20.5"><rect x="1921.55" y="585.35" width="19" height="19" fill="#a6afb6" stroke="#0e0e0e" stroke-width="1.5"/>
<path d="M 1925.8 595.6 L 1929.8 599.6 L 1936.8 590.6" stroke="#2a2a2a" stroke-width="1.3" fill="none"/></svg>
<div style="left:1172.3px;top:1304.6px;width:224.7px;height:32.4px;background:#636363;border-radius:4px 4px 0 0;"></div>
<div class="t" style="left:1211.40px;top:1310.71px;font-size:17.83px;line-height:17.83px;color:#e8e8e8;text-shadow:1.5px 1.5px 0 rgba(0,0,0,.85);transform:scaleX(1.0044);">Curve Editor</div>
<svg style="left:1373.3px;top:1316.6px;" width="10" height="10" viewBox="0 0 10 10"><path d="M1 1 L9 9 M9 1 L1 9" stroke="#3a3a3a" stroke-width="1.5"/></svg>
<div style="left:1166px;top:1336px;width:892px;height:200px;background:#636363;"></div>
<div style="left:1175.2px;top:1339.2px;width:883px;height:88.3px;background:#3d3d3d;border-radius:4px 0 0 4px;"></div>
<div style="left:1437.5px;top:1341px;width:3.2px;height:85px;background:#545454;border-radius:2px;box-shadow:-0.8px 0 0 #2c2c2c, 0.8px 0 0 #333;"></div>
<div style="left:1610.0px;top:1341px;width:3.2px;height:85px;background:#545454;border-radius:2px;box-shadow:-0.8px 0 0 #2c2c2c, 0.8px 0 0 #333;"></div>
<div style="left:1447.9px;top:1339.2px;width:72px;height:88.3px;background:#d98212;border-radius:3px;"></div>
<div style="left:1168.7px;top:1439.2px;width:889.3px;height:1.8px;background:#111;"></div>
<div style="left:1168.7px;top:1441px;width:300.5px;height:95px;background:#8a8a8a;"></div>
<div style="left:1469.2px;top:1439.2px;width:1.6px;height:97px;background:#111;"></div>
<div style="left:1470.8px;top:1441px;width:587.2px;height:95px;background:#3a3a3a;"></div>
<div style="left:1584.6000000000001px;top:1441px;width:1.6px;height:95px;background:#bcbcbc;"></div>
<div style="left:1702.8px;top:1441px;width:1.6px;height:95px;background:#bcbcbc;"></div>
<div style="left:1821.4px;top:1441px;width:1.6px;height:95px;background:#bcbcbc;"></div>
<div style="left:1939.9px;top:1441px;width:1.6px;height:95px;background:#bcbcbc;"></div>
<div class="t" style="left:1184.60px;top:1403.26px;font-size:18.12px;line-height:18.12px;color:#e0e0e0;text-shadow:1.5px 1.5px 0 rgba(0,0,0,.85);transform:scaleX(1.0139);">Horizontal</div>
<div class="t" style="left:1287.40px;top:1403.26px;font-size:18.12px;line-height:18.12px;color:#e0e0e0;text-shadow:1.5px 1.5px 0 rgba(0,0,0,.85);transform:scaleX(1.0350);">Vertical</div>
<div class="t" style="left:1386.90px;top:1403.26px;font-size:18.12px;line-height:18.12px;color:#e0e0e0;text-shadow:1.5px 1.5px 0 rgba(0,0,0,.85);transform:scaleX(1.0344);">Fit</div>
<div class="t" style="left:1467.30px;top:1403.26px;font-size:18.12px;line-height:18.12px;color:#e0e0e0;text-shadow:1.5px 1.5px 0 rgba(0,0,0,.85);transform:scaleX(0.9924);">Pan</div>
<div class="t" style="left:1544.00px;top:1403.26px;font-size:18.12px;line-height:18.12px;color:#e0e0e0;text-shadow:1.5px 1.5px 0 rgba(0,0,0,.85);transform:scaleX(1.0133);">Zoom</div>
<div class="t" style="left:1635.60px;top:1403.26px;font-size:18.12px;line-height:18.12px;color:#e0e0e0;text-shadow:1.5px 1.5px 0 rgba(0,0,0,.85);transform:scaleX(1.0141);">Auto</div>
<div class="t" style="left:1711.30px;top:1403.26px;font-size:18.12px;line-height:18.12px;color:#e0e0e0;text-shadow:1.5px 1.5px 0 rgba(0,0,0,.85);transform:scaleX(1.0173);">Auto/Clamped</div>
<div class="t" style="left:1864.80px;top:1403.26px;font-size:18.12px;line-height:18.12px;color:#e0e0e0;text-shadow:1.5px 1.5px 0 rgba(0,0,0,.85);transform:scaleX(0.9433);">User</div>
<div class="t" style="left:1945.00px;top:1403.26px;font-size:18.12px;line-height:18.12px;color:#e0e0e0;text-shadow:1.5px 1.5px 0 rgba(0,0,0,.85);transform:scaleX(0.9710);">Break</div>
<div class="t" style="left:2025.50px;top:1403.26px;font-size:18.12px;line-height:18.12px;color:#e0e0e0;text-shadow:1.5px 1.5px 0 rgba(0,0,0,.85);transform:scaleX(1.0368);">Line</div>
<svg style="left:1195px;top:1340px;overflow:visible;" width="61" height="60" viewBox="1195 1340 61 60">
<path d="M 1204.5 1342.3 H 1199 V 1398 H 1204.5" stroke="#8196d8" stroke-width="3.5" fill="none"/>
<path d="M 1245.5 1342.3 H 1251 V 1398 H 1245.5" stroke="#8196d8" stroke-width="3.5" fill="none"/>
<path d="M 1205 1389 L 1211 1385 V 1388 H 1223 V 1390 H 1211 V 1393 Z M 1245 1389 L 1239 1385 V 1388 H 1227 V 1390 H 1239 V 1393 Z" fill="#111" opacity=".8" filter="url(#bl2)"/>
<polygon points="1202,1370 1213,1358 1213,1365 1224,1365 1224,1375 1213,1375 1213,1382" fill="url(#gWhite2)"/>
<polygon points="1248,1370 1237,1358 1237,1365 1226,1365 1226,1375 1237,1375 1237,1382" fill="url(#gWhite2)"/></svg>
<svg style="left:1288px;top:1340px;overflow:visible;" width="62" height="60" viewBox="1288 1340 62 60">
<path d="M 1291.5 1349.5 V 1344 H 1345 V 1349.5" stroke="#8196d8" stroke-width="3.5" fill="none"/>
<path d="M 1291.5 1391.5 V 1397 H 1345 V 1391.5" stroke="#8196d8" stroke-width="3.5" fill="none"/>
<path d="M 1296 1384 H 1340" stroke="#111" stroke-width="2" opacity=".7"/>
<polygon points="1318.6,1347.4 1331,1359 1324,1359 1323,1369 1314,1369 1313,1359 1306,1359" fill="url(#gWhite2)"/>
<polygon points="1318.6,1393.6 1331,1383 1324,1383 1323,1372 1314,1372 1313,1383 1306,1383" fill="url(#gWhite2)"/></svg>
<svg style="left:1372px;top:1344px;overflow:visible;" width="58" height="56" viewBox="1372 1344 58 56">
<path d="M 1383.5 1359 V 1351.5 H 1392 M 1407 1351.5 H 1415 V 1359 M 1383.5 1374 V 1382 H 1392 M 1407 1382 H 1415 V 1374" stroke="#8196d8" stroke-width="2.6" fill="none"/>
<line x1="1376" y1="1385" x2="1422" y2="1349" stroke="#8196d8" stroke-width="1"/>
<path d="M 1378 1392 H 1420" stroke="#111" stroke-width="3" opacity=".6" filter="url(#bl2)"/>
<rect x="1400.2" y="1356.9" width="12" height="11.4" fill="#dc5a5a"/>
<rect x="1387.6" y="1367.6" width="11.4" height="12" fill="#dc5a5a"/>
<rect x="1418" y="1346" width="6" height="5" fill="#d8d8d8"/><rect x="1373" y="1382" width="6" height="6" fill="#d8d8d8"/></svg>
<svg style="left:1450px;top:1340px;overflow:visible;" width="66" height="64" viewBox="1450 1340 66 64"><path d="M 1458 1389 H 1508" stroke="#111" stroke-width="4" opacity=".8" filter="url(#bl2)"/><polygon points="1483.0,1342.5 1495.0,1354.5 1487.5,1354.5 1487.5,1367.0 1478.5,1367.0 1478.5,1354.5 1471.0,1354.5" fill="url(#gWhite2)"/><polygon points="1511.5,1371.0 1499.5,1383.0 1499.5,1375.5 1487.0,1375.5 1487.0,1366.5 1499.5,1366.5 1499.5,1359.0" fill="url(#gWhite2)"/><polygon points="1483.0,1399.5 1471.0,1387.5 1478.5,1387.5 1478.5,1375.0 1487.5,1375.0 1487.5,1387.5 1495.0,1387.5" fill="url(#gWhite2)"/><polygon points="1454.5,1371.0 1466.5,1359.0 1466.5,1366.5 1479.0,1366.5 1479.0,1375.5 1466.5,1375.5 1466.5,1383.0" fill="url(#gWhite2)"/></svg>
<svg style="left:1535px;top:1338px;overflow:visible;" width="65" height="64" viewBox="1535 1338 65 64"><path d="M 1545 1390 H 1590" stroke="#111" stroke-width="3" opacity=".7" filter="url(#bl2)"/><polygon points="1567.0,1342.0 1574.0,1350.0 1569.5,1350.0 1569.5,1367.0 1564.5,1367.0 1564.5,1350.0 1560.0,1350.0" fill="url(#gWhite2)"/><polygon points="1596.0,1371.0 1588.0,1378.0 1588.0,1373.5 1571.0,1373.5 1571.0,1368.5 1588.0,1368.5 1588.0,1364.0" fill="url(#gWhite2)"/><polygon points="1567.0,1400.0 1560.0,1392.0 1564.5,1392.0 1564.5,1375.0 1569.5,1375.0 1569.5,1392.0 1574.0,1392.0" fill="url(#gWhite2)"/><polygon points="1538.0,1371.0 1546.0,1364.0 1546.0,1368.5 1563.0,1368.5 1563.0,1373.5 1546.0,1373.5 1546.0,1378.0" fill="url(#gWhite2)"/><line x1="1574" y1="1379" x2="1584" y2="1391" stroke="#e8e8e8" stroke-width="2.5"/><circle cx="1567" cy="1370" r="12" fill="url(#gBall)" stroke="#e6e6e6" stroke-width="2"/></svg>
<svg style="left:1624px;top:1342px;overflow:visible;" width="66" height="54" viewBox="1624 1342 66 54"><path d="M 1626.6 1376.0 Q 1653.6 1340 1686.6 1377" stroke="#5a76c8" stroke-width="2" fill="none"/><path d="M 1626.6 1385 Q 1655.6 1374 1686.6 1385" stroke="#111" stroke-width="2.5" fill="none" opacity=".8"/><line x1="1634.6" y1="1349" x2="1680.6" y2="1363" stroke="#cfcfcf" stroke-width="1.2"/><circle cx="1634.6" cy="1349" r="2" fill="#e0e0e0"/><circle cx="1680.6" cy="1363" r="2" fill="#e0e0e0"/><rect x="1648.6" y="1350.5" width="12" height="12" fill="#dc5a5a" transform="rotate(-12 1654.6 1356.5)"/>
<path d="M 1648 1378 A 8 8 0 0 1 1663 1374" stroke="#f0f0f0" stroke-width="3.5" fill="none"/><polygon points="1660,1369 1667,1376 1659,1379" fill="#f0f0f0"/>
<path d="M 1666 1384 A 8 8 0 0 1 1651 1388" stroke="#f0f0f0" stroke-width="3.5" fill="none"/><polygon points="1654,1393 1647,1386 1655,1383" fill="#f0f0f0"/></svg>
<svg style="left:1738px;top:1342px;overflow:visible;" width="66" height="54" viewBox="1738 1342 66 54"><path d="M 1741.2 1376.0 Q 1768.2 1340 1801.2 1377" stroke="#5a76c8" stroke-width="2" fill="none"/><path d="M 1741.2 1385 Q 1770.2 1374 1801.2 1385" stroke="#111" stroke-width="2.5" fill="none" opacity=".8"/><line x1="1749.2" y1="1349" x2="1795.2" y2="1363" stroke="#cfcfcf" stroke-width="1.2"/><circle cx="1749.2" cy="1349" r="2" fill="#e0e0e0"/><circle cx="1795.2" cy="1363" r="2" fill="#e0e0e0"/><rect x="1763.2" y="1350.5" width="12" height="12" fill="#dc5a5a" transform="rotate(-12 1769.2 1356.5)"/>
<path d="M 1768 1369 H 1756 V 1385 H 1768" stroke="#d6d6d6" stroke-width="4" fill="none"/>
<rect x="1764" y="1378" width="4" height="10" fill="#d6d6d6"/><rect x="1758" y="1390" width="16" height="3" fill="#d6d6d6"/></svg>
<svg style="left:1852px;top:1342px;overflow:visible;" width="66" height="54" viewBox="1852 1342 66 54"><path d="M 1854.7 1376.0 Q 1881.7 1340 1914.7 1377" stroke="#5a76c8" stroke-width="2" fill="none"/><path d="M 1854.7 1385 Q 1883.7 1374 1914.7 1385" stroke="#111" stroke-width="2.5" fill="none" opacity=".8"/><line x1="1862.7" y1="1349" x2="1908.7" y2="1363" stroke="#cfcfcf" stroke-width="1.2"/><circle cx="1862.7" cy="1349" r="2" fill="#e0e0e0"/><circle cx="1908.7" cy="1363" r="2" fill="#e0e0e0"/><rect x="1876.7" y="1350.5" width="12" height="12" fill="#dc5a5a" transform="rotate(-12 1882.7 1356.5)"/>
<circle cx="1884" cy="1372" r="4.8" fill="url(#gBallW)"/>
<path d="M 1875 1394 Q 1875 1378 1884 1378 Q 1893 1378 1893 1394 Z" fill="url(#gBallW)"/></svg>
<svg style="left:1936px;top:1340px;overflow:visible;" width="64" height="58" viewBox="1936 1340 64 58">
<path d="M 1939 1350 Q 1955 1360 1968 1377 Q 1980 1369 1998 1381" stroke="#5a76c8" stroke-width="2" fill="none"/>
<path d="M 1939 1385 H 1998" stroke="#111" stroke-width="3" fill="none" opacity=".8"/>
<line x1="1968" y1="1376" x2="1956" y2="1355" stroke="#cfcfcf" stroke-width="1.2"/><line x1="1968" y1="1376" x2="1986" y2="1357" stroke="#cfcfcf" stroke-width="1.2"/>
<circle cx="1956" cy="1355" r="2" fill="#e0e0e0"/><circle cx="1986" cy="1357" r="2" fill="#e0e0e0"/>
<rect x="1963" y="1371" width="11" height="11" fill="#dc5a5a"/></svg>
<svg style="left:2020px;top:1340px;overflow:visible;" width="38" height="58" viewBox="2020 1340 38 58">
<path d="M 2023 1362 Q 2028 1352 2033 1356 L 2058 1372" stroke="#5a76c8" stroke-width="2" fill="none"/>
<path d="M 2023 1385 H 2058" stroke="#111" stroke-width="3" fill="none" opacity=".8"/>
<rect x="2024" y="1350" width="12" height="12" fill="#dc5a5a"/></svg>
<svg style="left:1022px;top:1163px;overflow:visible;" width="26" height="26" viewBox="1022 1163 26 26"><circle cx="1038" cy="1173.5" r="6.5" stroke="#111" stroke-width="3" fill="none"/><line x1="1033" y1="1178.5" x2="1027" y2="1184.5" stroke="#111" stroke-width="3.5" stroke-linecap="round"/></svg>
<svg style="left:1061px;top:1159px;overflow:visible;" width="39" height="33" viewBox="1061 1159 39 33"><rect x="1071.5" y="1164.2" width="2.5" height="2.6" fill="#6e6e6e"/><rect x="1076" y="1164.2" width="7.5" height="2.6" fill="#6e6e6e"/><rect x="1084.5" y="1164.2" width="7.5" height="2.6" fill="#6e6e6e"/><rect x="1071.5" y="1168.8" width="2.5" height="2.6" fill="#6e6e6e"/><rect x="1076" y="1168.8" width="7.5" height="2.6" fill="#6e6e6e"/><rect x="1084.5" y="1168.8" width="7.5" height="2.6" fill="#6e6e6e"/><rect x="1071.5" y="1173.3" width="2.5" height="2.6" fill="#6e6e6e"/><rect x="1076" y="1173.3" width="7.5" height="2.6" fill="#6e6e6e"/><rect x="1084.5" y="1173.3" width="7.5" height="2.6" fill="#6e6e6e"/><rect x="1071.5" y="1177.9" width="2.5" height="2.6" fill="#6e6e6e"/><rect x="1076" y="1177.9" width="7.5" height="2.6" fill="#6e6e6e"/><rect x="1084.5" y="1177.9" width="7.5" height="2.6" fill="#6e6e6e"/><rect x="1071.5" y="1182.4" width="2.5" height="2.6" fill="#6e6e6e"/><rect x="1076" y="1182.4" width="7.5" height="2.6" fill="#6e6e6e"/><rect x="1084.5" y="1182.4" width="7.5" height="2.6" fill="#6e6e6e"/></svg>
<svg style="left:1104px;top:1166px;overflow:visible;" width="48" height="20" viewBox="1104 1166 48 20">
<ellipse cx="1119.5" cy="1175.8" rx="13" ry="7.5" fill="url(#gBtn)"/>
<circle cx="1119.5" cy="1176" r="5" fill="#4f6ea8"/><rect x="1118" y="1172" width="3" height="3.5" fill="#dfe6f0"/>
<polygon points="1137,1172.5 1150,1172.5 1143.5,1179" fill="#c8c8c8"/></svg>
<svg style="left:524px;top:1294px;overflow:visible;" width="24" height="21" viewBox="524 1294 24 21"><polygon points="526.5,1304.5 536,1296 536,1300.5 545.7,1300.5 545.7,1308.5 536,1308.5 536,1313" fill="#e0e0e0"/></svg>
<svg style="left:560px;top:1294px;overflow:visible;" width="24" height="22" viewBox="560 1294 24 22"><circle cx="575" cy="1302.5" r="6" stroke="#d4d4d4" stroke-width="2.4" fill="none"/><line x1="570.5" y1="1307" x2="564.5" y2="1313" stroke="#d4d4d4" stroke-width="2.8" stroke-linecap="round"/></svg>
<svg style="left:12px;top:33px;overflow:visible;" width="28" height="28" viewBox="12 33 28 28">
<line x1="16" y1="57" x2="34" y2="44" stroke="#000" stroke-width="4" opacity=".5" filter="url(#bl2)"/>
<line x1="15.5" y1="37" x2="24" y2="45" stroke="#4a72e0" stroke-width="3.5" stroke-linecap="round"/>
<line x1="25" y1="47" x2="33" y2="56" stroke="#a8c0e0" stroke-width="1.5"/>
<line x1="16" y1="57" x2="28.5" y2="45.5" stroke="#f4f4f4" stroke-width="3.5" stroke-linecap="round"/>
<path d="M 36 42.5 A 4.5 4.5 0 1 1 31.5 38" stroke="#f4f4f4" stroke-width="3.4" fill="none"/></svg>
<svg style="left:13px;top:168px;overflow:visible;" width="25" height="26" viewBox="13 168 25 26">
<rect x="14.5" y="169" width="21.5" height="23" fill="#1c2230" opacity=".85"/>
<rect x="15.3" y="169.7" width="9.4" height="9.1" fill="#a6c6ea"/><rect x="26.7" y="169.7" width="8.4" height="9.1" fill="#eaf6f6"/>
<rect x="15.3" y="181" width="9.4" height="9.5" fill="#6f90dc"/><rect x="26.7" y="181" width="8.4" height="9.5" fill="#7094dc"/></svg>
<svg style="left:12px;top:1118px;overflow:visible;" width="28" height="28" viewBox="12 1118 28 28">
<ellipse cx="25" cy="1141" rx="10" ry="3" fill="#111" opacity=".8" filter="url(#bl2)"/>
<line x1="30.4" y1="1136.4" x2="37.3" y2="1142.7" stroke="#5a7ad8" stroke-width="2.6" stroke-linecap="round"/>
<circle cx="23.75" cy="1129.5" r="8.8" fill="#707070" stroke="#6482dc" stroke-width="2.4"/>
<rect x="22.9" y="1123" width="3.1" height="2.6" fill="#d6d6d6"/><rect x="23" y="1127.5" width="3" height="6" fill="#e0e0e0"/><rect x="21.5" y="1132.5" width="6" height="2.2" fill="#d8d8d8"/></svg>
<svg style="left:1182px;top:170px;overflow:visible;" width="20" height="22" viewBox="1182 170 20 22">
<radialGradient id="gSpk" cx="0.5" cy="0.5" r="0.5"><stop offset="0" stop-color="#e6f6ff"/><stop offset="0.5" stop-color="#8fb4ee"/><stop offset="1" stop-color="#5a7cc0"/></radialGradient>
<path d="M 1187 172 L 1196.5 182 M 1197 173 L 1187 182" stroke="#6d8fd0" stroke-width="1.2" opacity=".8"/>
<circle cx="1191.7" cy="177.3" r="4.3" fill="url(#gSpk)"/>
<circle cx="1190.5" cy="184.3" r="3.2" fill="url(#gSpk)"/>
<circle cx="1193.6" cy="187.5" r="2.6" fill="#7a9ad6"/></svg>
<svg style="left:1178px;top:1307px;overflow:visible;" width="28" height="28" viewBox="1178 1307 28 28">
<path d="M 1199 1314 H 1184.5 V 1329" stroke="#3a3a3a" stroke-width="2.2" fill="none"/>
<path d="M 1184.5 1329.5 A 15.5 16 0 0 0 1200 1313.5" stroke="#222" stroke-width="4" fill="none"/>
<path d="M 1184.5 1329.5 A 15.5 16 0 0 0 1200 1313.5" stroke="#9c9c9c" stroke-width="1.6" fill="none"/></svg>
</body></html>
